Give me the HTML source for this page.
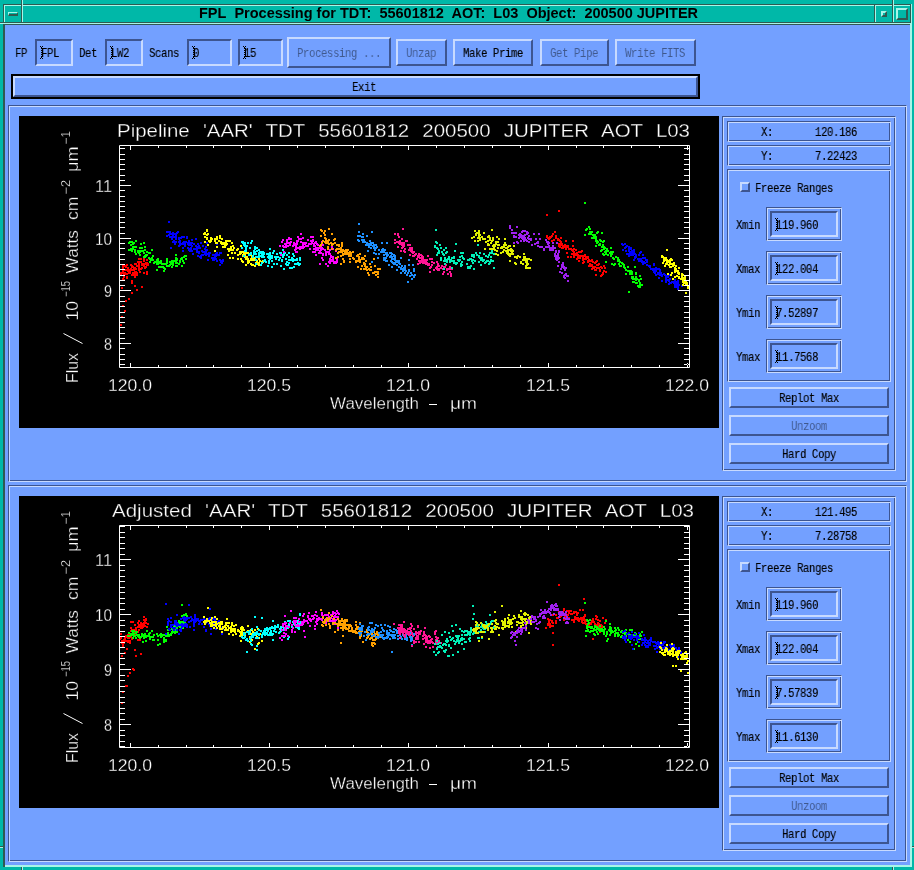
<!DOCTYPE html>
<html><head><meta charset="utf-8"><title>FPL Processing</title>
<style>
html,body{margin:0;padding:0;}
body{width:914px;height:870px;position:relative;overflow:hidden;background:#00b8a8;}
.abs,svg{will-change:transform;}
.abs{position:absolute;box-sizing:border-box;}
.ttl{font-family:"Liberation Sans",sans-serif;font-weight:bold;font-size:14.5px;line-height:17px;text-align:center;color:#000;white-space:pre;}
.mono{font-family:"Liberation Mono",monospace;font-size:13px;line-height:17px;color:#000;white-space:pre;transform:scaleX(0.82);transform-origin:0 0;letter-spacing:-0.483px;-webkit-text-stroke:0.15px currentColor;}
.ins{color:rgba(0,0,0,0.45);-webkit-text-stroke:0 !important;}
.fld{border-style:solid;border-width:2px;border-color:#3d5590 #c8daff #c8daff #3d5590;}
.btn{background:#73a0ff;border-style:solid;border-width:2px;border-color:#c8daff #3d5590 #3d5590 #c8daff;}
.etch{border-style:solid;border-width:1px;border-color:#3d5590 #c8daff #c8daff #3d5590;box-shadow:inset 1px 1px 0 #c8daff, inset -1px -1px 0 #3d5590;}
.chk{border-style:solid;border-width:2px;border-color:#c8daff #3d5590 #3d5590 #c8daff;}
.ibeam{width:3px;height:10px;border-left:1px dotted #000;}
</style></head>
<body>
<div class="abs" style="left:0px;top:0px;width:914px;height:870px;background:#00b8a8"></div>
<div class="abs" style="left:3px;top:4px;width:908px;height:20px;border-top:1px solid #2f5a52;border-left:1px solid #2f5a52;"></div>
<div class="abs" style="left:4px;top:5px;width:908px;height:19px;border-top:1px solid #a8f5e8;border-left:1px solid #a8f5e8;"></div>
<div class="abs" style="left:21px;top:0px;width:1px;height:23px;background:#2f5a52"></div>
<div class="abs" style="left:22px;top:0px;width:1px;height:23px;background:#a8f5e8"></div>
<div class="abs" style="left:874px;top:5px;width:1px;height:18px;background:#2f5a52"></div>
<div class="abs" style="left:875px;top:5px;width:1px;height:18px;background:#a8f5e8"></div>
<div class="abs" style="left:892px;top:0px;width:1px;height:23px;background:#2f5a52"></div>
<div class="abs" style="left:893px;top:0px;width:1px;height:23px;background:#a8f5e8"></div>
<div class="abs" style="left:910px;top:4px;width:1px;height:19px;background:#2f5a52"></div>
<div class="abs" style="left:911px;top:4px;width:1px;height:863px;background:#a8f5e8"></div>
<div class="abs" style="left:0px;top:22px;width:911px;height:1px;background:#2f5a52"></div>
<div class="abs" style="left:0px;top:23px;width:912px;height:1px;background:#a8f5e8"></div>
<div class="abs" style="left:8px;top:12px;width:10px;height:4px;background:#00b8a8;border-top:1px solid #a8f5e8;border-left:1px solid #a8f5e8;border-bottom:2px solid #2f5a52;border-right:1px solid #2f5a52;"></div>
<div class="abs" style="left:881px;top:11px;width:6px;height:6px;border-top:2px solid #a8f5e8;border-left:2px solid #a8f5e8;border-bottom:2px solid #2f5a52;border-right:2px solid #2f5a52;"></div>
<div class="abs" style="left:896px;top:8px;width:12px;height:12px;border-top:2px solid #a8f5e8;border-left:2px solid #a8f5e8;border-bottom:2px solid #2f5a52;border-right:2px solid #2f5a52;"></div>
<div class="abs ttl" style="left:23px;top:5px;width:851px;height:17px;">FPL&nbsp; Processing for TDT:&nbsp; 55601812&nbsp; AOT:&nbsp; L03&nbsp; Object:&nbsp; 200500 JUPITER</div>
<div class="abs" style="left:5px;top:24px;width:907px;height:843px;background:#a8f5e8"></div>
<div class="abs" style="left:3px;top:24px;width:2px;height:843px;background:#2f5a52"></div>
<div class="abs" style="left:3px;top:24px;width:907px;height:841px;background:#2f5a52"></div>
<div class="abs" style="left:5px;top:25px;width:905px;height:840px;background:#73a0ff"></div>
<div class="abs" style="left:0px;top:846px;width:3px;height:1px;background:#2f5a52"></div>
<div class="abs" style="left:0px;top:847px;width:3px;height:1px;background:#a8f5e8"></div>
<div class="abs" style="left:912px;top:846px;width:2px;height:1px;background:#2f5a52"></div>
<div class="abs" style="left:912px;top:847px;width:2px;height:1px;background:#a8f5e8"></div>
<div class="abs" style="left:21px;top:867px;width:1px;height:3px;background:#2f5a52"></div>
<div class="abs" style="left:22px;top:867px;width:1px;height:3px;background:#a8f5e8"></div>
<div class="abs" style="left:892px;top:867px;width:1px;height:3px;background:#2f5a52"></div>
<div class="abs" style="left:893px;top:867px;width:1px;height:3px;background:#a8f5e8"></div>
<div class="abs mono" style="left:15px;top:45px;">FP</div>
<div class="abs fld" style="left:35px;top:39px;width:38px;height:27px;"></div>
<div class="abs mono" style="left:41px;top:45px;">FPL</div>
<svg class="abs" style="left:40px;top:46px" width="3" height="13" viewBox="0 0 3 13"><path fill="#000" d="M0 0h1v1h-1zM2 0h1v1h-1zM1 1h1v1h-1zM1 11h1v1h-1zM0 12h1v1h-1zM2 12h1v1h-1zM2 2h1v1h-1zM2 3h1v1h-1zM2 4h1v1h-1zM2 5h1v1h-1zM2 6h1v1h-1zM2 7h1v1h-1zM2 8h1v1h-1zM2 9h1v1h-1zM2 10h1v1h-1zM1 2h1v1h-1zM1 4h1v1h-1zM1 6h1v1h-1zM1 8h1v1h-1zM1 10h1v1h-1z"/></svg>
<div class="abs mono" style="left:79px;top:45px;">Det</div>
<div class="abs fld" style="left:105px;top:39px;width:38px;height:27px;"></div>
<div class="abs mono" style="left:111px;top:45px;">LW2</div>
<svg class="abs" style="left:110px;top:46px" width="3" height="13" viewBox="0 0 3 13"><path fill="#000" d="M0 0h1v1h-1zM2 0h1v1h-1zM1 1h1v1h-1zM1 11h1v1h-1zM0 12h1v1h-1zM2 12h1v1h-1zM2 2h1v1h-1zM2 3h1v1h-1zM2 4h1v1h-1zM2 5h1v1h-1zM2 6h1v1h-1zM2 7h1v1h-1zM2 8h1v1h-1zM2 9h1v1h-1zM2 10h1v1h-1zM1 2h1v1h-1zM1 4h1v1h-1zM1 6h1v1h-1zM1 8h1v1h-1zM1 10h1v1h-1z"/></svg>
<div class="abs mono" style="left:149px;top:45px;">Scans</div>
<div class="abs fld" style="left:187px;top:39px;width:45px;height:27px;"></div>
<div class="abs mono" style="left:193px;top:45px;">0</div>
<svg class="abs" style="left:192px;top:46px" width="3" height="13" viewBox="0 0 3 13"><path fill="#000" d="M0 0h1v1h-1zM2 0h1v1h-1zM1 1h1v1h-1zM1 11h1v1h-1zM0 12h1v1h-1zM2 12h1v1h-1zM2 2h1v1h-1zM2 3h1v1h-1zM2 4h1v1h-1zM2 5h1v1h-1zM2 6h1v1h-1zM2 7h1v1h-1zM2 8h1v1h-1zM2 9h1v1h-1zM2 10h1v1h-1zM1 2h1v1h-1zM1 4h1v1h-1zM1 6h1v1h-1zM1 8h1v1h-1zM1 10h1v1h-1z"/></svg>
<div class="abs fld" style="left:238px;top:39px;width:45px;height:27px;"></div>
<div class="abs mono" style="left:244px;top:45px;">15</div>
<svg class="abs" style="left:243px;top:46px" width="3" height="13" viewBox="0 0 3 13"><path fill="#000" d="M0 0h1v1h-1zM2 0h1v1h-1zM1 1h1v1h-1zM1 11h1v1h-1zM0 12h1v1h-1zM2 12h1v1h-1zM2 2h1v1h-1zM2 3h1v1h-1zM2 4h1v1h-1zM2 5h1v1h-1zM2 6h1v1h-1zM2 7h1v1h-1zM2 8h1v1h-1zM2 9h1v1h-1zM2 10h1v1h-1zM1 2h1v1h-1zM1 4h1v1h-1zM1 6h1v1h-1zM1 8h1v1h-1zM1 10h1v1h-1z"/></svg>
<div class="abs btn" style="left:287px;top:37px;width:104px;height:31px;"></div>
<div class="abs mono ins" style="left:297px;top:45px;">Processing&nbsp;...</div>
<div class="abs btn" style="left:396px;top:39px;width:51px;height:27px;"></div>
<div class="abs mono ins" style="left:406px;top:45px;">Unzap</div>
<div class="abs btn" style="left:453px;top:39px;width:80px;height:27px;"></div>
<div class="abs mono" style="left:463px;top:45px;">Make&nbsp;Prime</div>
<div class="abs btn" style="left:540px;top:39px;width:69px;height:27px;"></div>
<div class="abs mono ins" style="left:550px;top:45px;">Get&nbsp;Pipe</div>
<div class="abs btn" style="left:615px;top:39px;width:81px;height:27px;"></div>
<div class="abs mono ins" style="left:625px;top:45px;">Write&nbsp;FITS</div>
<div class="abs" style="left:11px;top:74px;width:689px;height:25px;background:#000"></div>
<div class="abs btn" style="left:13px;top:76px;width:685px;height:21px;"></div>
<div class="abs mono" style="left:352px;top:79px;">Exit</div>
<div class="abs etch" style="left:8px;top:105px;width:899px;height:377px;"></div>
<div class="abs" style="left:19px;top:116px;width:700px;height:312px;background:#000"></div>
<svg class="abs" style="left:19px;top:116px" width="700" height="312" viewBox="19 116 700 312"><path fill="#ff0000" d="M133 267h2v2h-2zM134 273h2v2h-2zM138 269h2v2h-2zM122 272h2v2h-2zM146 254h2v2h-2zM124 272h2v2h-2zM126 273h2v2h-2zM130 269h2v2h-2zM133 269h2v2h-2zM148 252h2v2h-2zM128 272h2v2h-2zM141 263h2v2h-2zM147 263h2v2h-2zM146 264h2v2h-2zM122 270h2v2h-2zM124 272h2v2h-2zM123 273h2v2h-2zM141 264h2v2h-2zM126 276h2v2h-2zM123 276h2v2h-2zM146 271h2v2h-2zM127 267h2v2h-2zM123 279h2v2h-2zM141 267h2v2h-2zM122 278h2v2h-2zM131 269h2v2h-2zM136 272h2v2h-2zM145 266h2v2h-2zM141 286h2v2h-2zM143 265h2v2h-2zM121 287h2v2h-2zM126 269h2v2h-2zM125 273h2v2h-2zM134 263h2v2h-2zM146 264h2v2h-2zM132 272h2v2h-2zM134 274h2v2h-2zM146 259h2v2h-2zM126 273h2v2h-2zM140 268h2v2h-2zM131 282h2v2h-2zM122 265h2v2h-2zM140 258h2v2h-2zM131 266h2v2h-2zM132 266h2v2h-2zM136 265h2v2h-2zM124 273h2v2h-2zM140 261h2v2h-2zM133 272h2v2h-2zM120 274h2v2h-2zM137 261h2v2h-2zM126 277h2v2h-2zM127 269h2v2h-2zM131 280h2v2h-2zM126 264h2v2h-2zM143 263h2v2h-2zM125 266h2v2h-2zM139 271h2v2h-2zM132 273h2v2h-2zM136 274h2v2h-2zM147 264h2v2h-2zM143 260h2v2h-2zM129 271h2v2h-2zM133 267h2v2h-2zM123 269h2v2h-2zM138 258h2v2h-2zM138 267h2v2h-2zM120 272h2v2h-2zM127 267h2v2h-2zM135 271h2v2h-2zM146 262h2v2h-2zM122 267h2v2h-2zM131 265h2v2h-2zM145 262h2v2h-2zM138 261h2v2h-2zM128 269h2v2h-2zM134 276h2v2h-2zM144 267h2v2h-2zM135 268h2v2h-2zM142 263h2v2h-2zM129 272h2v2h-2zM135 263h2v2h-2zM146 263h2v2h-2zM126 277h2v2h-2zM138 263h2v2h-2zM130 264h2v2h-2zM127 270h2v2h-2zM134 267h2v2h-2zM138 266h2v2h-2zM130 268h2v2h-2zM138 265h2v2h-2zM146 273h2v2h-2zM124 265h2v2h-2zM133 274h2v2h-2zM145 263h2v2h-2zM125 269h2v2h-2zM131 274h2v2h-2zM123 275h2v2h-2zM134 271h2v2h-2zM135 273h2v2h-2zM138 263h2v2h-2zM143 258h2v2h-2zM143 272h2v2h-2zM126 269h2v2h-2zM126 273h2v2h-2zM134 285h2v2h-2zM136 289h2v2h-2zM128 298h2v2h-2zM125 300h2v2h-2zM124 310h2v2h-2zM121 316h2v2h-2zM120 324h2v2h-2zM131 292h2v2h-2zM122 305h2v2h-2zM595 261h2v2h-2zM582 259h2v2h-2zM559 240h2v2h-2zM599 269h2v2h-2zM603 265h2v2h-2zM565 240h2v2h-2zM571 249h2v2h-2zM580 251h2v2h-2zM557 238h2v2h-2zM577 256h2v2h-2zM564 244h2v2h-2zM560 242h2v2h-2zM563 246h2v2h-2zM578 260h2v2h-2zM573 248h2v2h-2zM600 275h2v2h-2zM547 237h2v2h-2zM555 235h2v2h-2zM575 249h2v2h-2zM551 240h2v2h-2zM601 274h2v2h-2zM583 261h2v2h-2zM600 266h2v2h-2zM598 267h2v2h-2zM558 245h2v2h-2zM601 267h2v2h-2zM560 244h2v2h-2zM571 253h2v2h-2zM549 236h2v2h-2zM576 258h2v2h-2zM572 240h2v2h-2zM557 239h2v2h-2zM550 236h2v2h-2zM596 264h2v2h-2zM588 259h2v2h-2zM574 253h2v2h-2zM598 263h2v2h-2zM596 260h2v2h-2zM572 250h2v2h-2zM590 265h2v2h-2zM587 256h2v2h-2zM560 244h2v2h-2zM573 254h2v2h-2zM570 256h2v2h-2zM561 243h2v2h-2zM554 231h2v2h-2zM560 241h2v2h-2zM591 259h2v2h-2zM605 271h2v2h-2zM582 258h2v2h-2zM592 266h2v2h-2zM565 245h2v2h-2zM582 262h2v2h-2zM587 257h2v2h-2zM593 267h2v2h-2zM557 239h2v2h-2zM583 258h2v2h-2zM562 247h2v2h-2zM595 269h2v2h-2zM561 243h2v2h-2zM551 240h2v2h-2zM560 243h2v2h-2zM566 252h2v2h-2zM594 266h2v2h-2zM562 245h2v2h-2zM546 236h2v2h-2zM585 258h2v2h-2zM585 256h2v2h-2zM578 251h2v2h-2zM546 235h2v2h-2zM572 245h2v2h-2zM588 265h2v2h-2zM597 264h2v2h-2zM577 257h2v2h-2zM602 272h2v2h-2zM592 266h2v2h-2zM583 255h2v2h-2zM581 250h2v2h-2zM558 239h2v2h-2zM594 269h2v2h-2zM594 262h2v2h-2zM599 270h2v2h-2zM591 268h2v2h-2zM592 267h2v2h-2zM602 273h2v2h-2zM557 239h2v2h-2zM587 260h2v2h-2zM568 248h2v2h-2zM596 264h2v2h-2zM597 264h2v2h-2zM553 239h2v2h-2zM573 256h2v2h-2zM551 235h2v2h-2zM555 237h2v2h-2zM597 267h2v2h-2zM579 255h2v2h-2zM582 256h2v2h-2zM576 252h2v2h-2zM590 260h2v2h-2zM573 253h2v2h-2zM592 261h2v2h-2zM590 264h2v2h-2zM591 264h2v2h-2zM595 274h2v2h-2zM567 245h2v2h-2zM596 267h2v2h-2zM604 267h2v2h-2zM549 237h2v2h-2zM581 255h2v2h-2zM565 248h2v2h-2zM560 237h2v2h-2zM592 261h2v2h-2zM579 257h2v2h-2zM551 235h2v2h-2zM599 270h2v2h-2zM584 254h2v2h-2zM558 243h2v2h-2zM567 256h2v2h-2zM603 270h2v2h-2zM548 238h2v2h-2zM587 261h2v2h-2zM565 247h2v2h-2zM570 248h2v2h-2zM567 246h2v2h-2zM552 233h2v2h-2zM575 254h2v2h-2zM589 260h2v2h-2zM573 251h2v2h-2zM577 254h2v2h-2zM589 263h2v2h-2zM559 246h2v2h-2zM587 260h2v2h-2zM600 266h2v2h-2zM577 254h2v2h-2zM561 247h2v2h-2zM546 214h2v2h-2zM558 210h2v2h-2z"/><path fill="#00ff00" d="M175 260h2v2h-2zM151 257h2v2h-2zM166 262h2v2h-2zM154 261h2v2h-2zM139 251h2v2h-2zM157 262h2v2h-2zM140 243h2v2h-2zM183 262h2v2h-2zM153 262h2v2h-2zM156 261h2v2h-2zM167 265h2v2h-2zM169 264h2v2h-2zM157 258h2v2h-2zM166 258h2v2h-2zM162 263h2v2h-2zM143 242h2v2h-2zM175 258h2v2h-2zM166 260h2v2h-2zM167 265h2v2h-2zM128 242h2v2h-2zM141 247h2v2h-2zM163 263h2v2h-2zM184 255h2v2h-2zM183 256h2v2h-2zM143 252h2v2h-2zM149 261h2v2h-2zM159 262h2v2h-2zM185 258h2v2h-2zM162 266h2v2h-2zM138 252h2v2h-2zM162 263h2v2h-2zM156 263h2v2h-2zM163 267h2v2h-2zM145 254h2v2h-2zM135 253h2v2h-2zM172 262h2v2h-2zM131 250h2v2h-2zM181 258h2v2h-2zM170 262h2v2h-2zM160 262h2v2h-2zM139 250h2v2h-2zM152 259h2v2h-2zM160 260h2v2h-2zM185 255h2v2h-2zM135 240h2v2h-2zM148 252h2v2h-2zM160 262h2v2h-2zM144 246h2v2h-2zM130 249h2v2h-2zM161 263h2v2h-2zM132 246h2v2h-2zM149 258h2v2h-2zM170 263h2v2h-2zM173 260h2v2h-2zM152 255h2v2h-2zM163 270h2v2h-2zM168 265h2v2h-2zM134 249h2v2h-2zM158 261h2v2h-2zM171 266h2v2h-2zM132 243h2v2h-2zM143 256h2v2h-2zM148 252h2v2h-2zM181 257h2v2h-2zM172 264h2v2h-2zM181 265h2v2h-2zM148 257h2v2h-2zM139 247h2v2h-2zM176 265h2v2h-2zM179 261h2v2h-2zM159 261h2v2h-2zM171 260h2v2h-2zM133 242h2v2h-2zM134 251h2v2h-2zM164 268h2v2h-2zM156 263h2v2h-2zM182 260h2v2h-2zM169 261h2v2h-2zM175 257h2v2h-2zM176 259h2v2h-2zM157 259h2v2h-2zM151 249h2v2h-2zM149 258h2v2h-2zM145 255h2v2h-2zM135 246h2v2h-2zM130 244h2v2h-2zM130 248h2v2h-2zM141 250h2v2h-2zM139 254h2v2h-2zM146 251h2v2h-2zM144 249h2v2h-2zM157 263h2v2h-2zM131 241h2v2h-2zM156 269h2v2h-2zM165 263h2v2h-2zM149 252h2v2h-2zM137 251h2v2h-2zM175 254h2v2h-2zM144 256h2v2h-2zM129 241h2v2h-2zM133 246h2v2h-2zM156 259h2v2h-2zM176 258h2v2h-2zM180 258h2v2h-2zM158 266h2v2h-2zM146 254h2v2h-2zM153 262h2v2h-2zM131 249h2v2h-2zM175 261h2v2h-2zM166 261h2v2h-2zM129 241h2v2h-2zM160 266h2v2h-2zM144 255h2v2h-2zM142 250h2v2h-2zM181 257h2v2h-2zM175 262h2v2h-2zM166 265h2v2h-2zM176 262h2v2h-2zM137 250h2v2h-2zM179 260h2v2h-2zM170 263h2v2h-2zM150 259h2v2h-2zM183 256h2v2h-2zM128 249h2v2h-2zM132 248h2v2h-2zM175 265h2v2h-2zM178 263h2v2h-2zM593 236h2v2h-2zM595 236h2v2h-2zM623 266h2v2h-2zM617 259h2v2h-2zM640 278h2v2h-2zM589 231h2v2h-2zM601 232h2v2h-2zM631 276h2v2h-2zM605 261h2v2h-2zM603 246h2v2h-2zM619 261h2v2h-2zM634 266h2v2h-2zM597 241h2v2h-2zM629 273h2v2h-2zM624 267h2v2h-2zM635 276h2v2h-2zM586 228h2v2h-2zM635 279h2v2h-2zM604 247h2v2h-2zM610 254h2v2h-2zM584 234h2v2h-2zM635 276h2v2h-2zM600 240h2v2h-2zM598 244h2v2h-2zM600 250h2v2h-2zM591 237h2v2h-2zM599 243h2v2h-2zM638 286h2v2h-2zM600 240h2v2h-2zM588 226h2v2h-2zM617 257h2v2h-2zM613 258h2v2h-2zM622 263h2v2h-2zM599 243h2v2h-2zM590 232h2v2h-2zM632 276h2v2h-2zM638 279h2v2h-2zM604 251h2v2h-2zM615 256h2v2h-2zM613 258h2v2h-2zM639 282h2v2h-2zM620 265h2v2h-2zM607 254h2v2h-2zM592 234h2v2h-2zM633 281h2v2h-2zM607 250h2v2h-2zM636 282h2v2h-2zM591 231h2v2h-2zM603 254h2v2h-2zM628 291h2v2h-2zM595 240h2v2h-2zM615 256h2v2h-2zM610 251h2v2h-2zM605 252h2v2h-2zM639 275h2v2h-2zM613 258h2v2h-2zM632 281h2v2h-2zM594 234h2v2h-2zM601 249h2v2h-2zM630 271h2v2h-2zM599 239h2v2h-2zM610 254h2v2h-2zM617 260h2v2h-2zM589 228h2v2h-2zM595 245h2v2h-2zM609 252h2v2h-2zM618 259h2v2h-2zM599 243h2v2h-2zM605 252h2v2h-2zM623 264h2v2h-2zM630 270h2v2h-2zM595 240h2v2h-2zM619 265h2v2h-2zM631 277h2v2h-2zM619 265h2v2h-2zM623 266h2v2h-2zM606 248h2v2h-2zM632 277h2v2h-2zM606 249h2v2h-2zM592 234h2v2h-2zM641 284h2v2h-2zM631 271h2v2h-2zM610 252h2v2h-2zM632 281h2v2h-2zM597 231h2v2h-2zM640 284h2v2h-2zM593 234h2v2h-2zM595 238h2v2h-2zM588 233h2v2h-2zM639 284h2v2h-2zM614 263h2v2h-2zM636 278h2v2h-2zM601 246h2v2h-2zM590 233h2v2h-2zM638 280h2v2h-2zM602 241h2v2h-2zM602 245h2v2h-2zM611 253h2v2h-2zM596 240h2v2h-2zM635 282h2v2h-2zM601 249h2v2h-2zM605 253h2v2h-2zM613 258h2v2h-2zM611 263h2v2h-2zM619 265h2v2h-2zM589 233h2v2h-2zM590 232h2v2h-2zM625 273h2v2h-2zM629 272h2v2h-2zM618 263h2v2h-2zM637 285h2v2h-2zM602 253h2v2h-2zM585 229h2v2h-2zM603 248h2v2h-2zM635 272h2v2h-2zM595 236h2v2h-2zM634 278h2v2h-2zM613 264h2v2h-2zM612 251h2v2h-2zM627 266h2v2h-2zM627 270h2v2h-2zM639 286h2v2h-2zM603 240h2v2h-2zM639 282h2v2h-2zM596 232h2v2h-2zM631 273h2v2h-2zM603 247h2v2h-2zM628 270h2v2h-2zM605 250h2v2h-2zM612 257h2v2h-2zM596 242h2v2h-2zM593 237h2v2h-2zM602 244h2v2h-2zM610 247h2v2h-2zM625 269h2v2h-2zM635 273h2v2h-2zM631 276h2v2h-2zM621 262h2v2h-2zM632 278h2v2h-2zM599 244h2v2h-2zM610 255h2v2h-2zM592 237h2v2h-2zM584 202h2v2h-2z"/><path fill="#0000ff" d="M175 236h2v2h-2zM207 259h2v2h-2zM202 251h2v2h-2zM197 255h2v2h-2zM188 249h2v2h-2zM172 234h2v2h-2zM200 242h2v2h-2zM213 259h2v2h-2zM182 250h2v2h-2zM212 254h2v2h-2zM170 233h2v2h-2zM202 245h2v2h-2zM187 242h2v2h-2zM178 241h2v2h-2zM197 247h2v2h-2zM198 247h2v2h-2zM205 249h2v2h-2zM191 242h2v2h-2zM205 254h2v2h-2zM212 259h2v2h-2zM196 246h2v2h-2zM190 247h2v2h-2zM206 242h2v2h-2zM208 252h2v2h-2zM172 236h2v2h-2zM168 234h2v2h-2zM183 242h2v2h-2zM216 243h2v2h-2zM190 249h2v2h-2zM199 256h2v2h-2zM173 236h2v2h-2zM179 240h2v2h-2zM215 258h2v2h-2zM201 250h2v2h-2zM186 237h2v2h-2zM192 253h2v2h-2zM217 254h2v2h-2zM195 238h2v2h-2zM178 245h2v2h-2zM169 231h2v2h-2zM216 252h2v2h-2zM205 252h2v2h-2zM178 237h2v2h-2zM175 233h2v2h-2zM188 240h2v2h-2zM180 237h2v2h-2zM184 245h2v2h-2zM190 244h2v2h-2zM200 255h2v2h-2zM171 233h2v2h-2zM182 247h2v2h-2zM220 260h2v2h-2zM187 243h2v2h-2zM196 251h2v2h-2zM208 253h2v2h-2zM205 250h2v2h-2zM209 252h2v2h-2zM191 239h2v2h-2zM179 244h2v2h-2zM193 243h2v2h-2zM198 252h2v2h-2zM166 235h2v2h-2zM183 243h2v2h-2zM198 245h2v2h-2zM175 238h2v2h-2zM201 254h2v2h-2zM171 238h2v2h-2zM176 232h2v2h-2zM169 236h2v2h-2zM219 259h2v2h-2zM220 260h2v2h-2zM169 233h2v2h-2zM188 244h2v2h-2zM168 221h2v2h-2zM178 238h2v2h-2zM191 250h2v2h-2zM222 259h2v2h-2zM202 254h2v2h-2zM215 253h2v2h-2zM187 247h2v2h-2zM179 242h2v2h-2zM175 241h2v2h-2zM185 241h2v2h-2zM214 256h2v2h-2zM205 252h2v2h-2zM174 243h2v2h-2zM206 253h2v2h-2zM219 252h2v2h-2zM216 260h2v2h-2zM170 247h2v2h-2zM195 248h2v2h-2zM168 234h2v2h-2zM183 241h2v2h-2zM205 246h2v2h-2zM174 242h2v2h-2zM189 242h2v2h-2zM182 242h2v2h-2zM166 231h2v2h-2zM220 252h2v2h-2zM177 231h2v2h-2zM214 254h2v2h-2zM191 245h2v2h-2zM184 243h2v2h-2zM189 248h2v2h-2zM179 242h2v2h-2zM174 233h2v2h-2zM204 253h2v2h-2zM171 236h2v2h-2zM198 251h2v2h-2zM168 231h2v2h-2zM181 243h2v2h-2zM200 257h2v2h-2zM218 254h2v2h-2zM189 250h2v2h-2zM215 255h2v2h-2zM173 240h2v2h-2zM221 261h2v2h-2zM205 251h2v2h-2zM187 243h2v2h-2zM195 245h2v2h-2zM219 264h2v2h-2zM183 236h2v2h-2zM221 262h2v2h-2zM193 248h2v2h-2zM208 255h2v2h-2zM184 241h2v2h-2zM171 238h2v2h-2zM172 232h2v2h-2zM175 235h2v2h-2zM181 236h2v2h-2zM206 249h2v2h-2zM186 236h2v2h-2zM197 243h2v2h-2zM213 257h2v2h-2zM204 251h2v2h-2zM199 247h2v2h-2zM204 248h2v2h-2zM220 261h2v2h-2zM172 241h2v2h-2zM222 260h2v2h-2zM196 249h2v2h-2zM211 257h2v2h-2zM681 285h2v2h-2zM675 283h2v2h-2zM654 271h2v2h-2zM669 274h2v2h-2zM634 257h2v2h-2zM665 281h2v2h-2zM646 260h2v2h-2zM628 253h2v2h-2zM652 269h2v2h-2zM674 286h2v2h-2zM677 286h2v2h-2zM667 274h2v2h-2zM633 249h2v2h-2zM653 271h2v2h-2zM628 248h2v2h-2zM674 284h2v2h-2zM676 286h2v2h-2zM660 274h2v2h-2zM634 256h2v2h-2zM629 251h2v2h-2zM659 269h2v2h-2zM677 281h2v2h-2zM638 259h2v2h-2zM643 262h2v2h-2zM655 270h2v2h-2zM655 269h2v2h-2zM675 281h2v2h-2zM654 270h2v2h-2zM642 261h2v2h-2zM625 250h2v2h-2zM664 274h2v2h-2zM660 274h2v2h-2zM624 243h2v2h-2zM631 253h2v2h-2zM639 260h2v2h-2zM659 274h2v2h-2zM663 273h2v2h-2zM621 243h2v2h-2zM654 272h2v2h-2zM677 283h2v2h-2zM637 258h2v2h-2zM675 285h2v2h-2zM642 257h2v2h-2zM677 288h2v2h-2zM677 280h2v2h-2zM622 249h2v2h-2zM668 280h2v2h-2zM630 248h2v2h-2zM653 268h2v2h-2zM676 285h2v2h-2zM635 254h2v2h-2zM669 282h2v2h-2zM638 258h2v2h-2zM645 259h2v2h-2zM629 247h2v2h-2zM631 250h2v2h-2zM664 274h2v2h-2zM663 273h2v2h-2zM658 268h2v2h-2zM649 265h2v2h-2zM661 275h2v2h-2zM665 275h2v2h-2zM648 265h2v2h-2zM638 260h2v2h-2zM628 255h2v2h-2zM641 260h2v2h-2zM624 247h2v2h-2zM661 274h2v2h-2zM673 281h2v2h-2zM630 248h2v2h-2zM628 246h2v2h-2zM658 277h2v2h-2zM655 267h2v2h-2zM632 254h2v2h-2zM622 244h2v2h-2zM634 253h2v2h-2zM630 254h2v2h-2zM630 247h2v2h-2zM659 273h2v2h-2zM646 264h2v2h-2zM626 253h2v2h-2zM668 283h2v2h-2zM671 281h2v2h-2zM643 261h2v2h-2zM670 282h2v2h-2zM675 285h2v2h-2zM667 276h2v2h-2zM656 268h2v2h-2zM653 263h2v2h-2zM626 245h2v2h-2zM630 252h2v2h-2zM641 261h2v2h-2zM629 251h2v2h-2zM625 246h2v2h-2zM676 285h2v2h-2zM665 279h2v2h-2zM631 253h2v2h-2zM657 272h2v2h-2zM634 257h2v2h-2zM655 274h2v2h-2zM642 254h2v2h-2zM665 276h2v2h-2zM639 252h2v2h-2zM657 273h2v2h-2zM640 259h2v2h-2zM650 268h2v2h-2zM630 252h2v2h-2zM640 251h2v2h-2zM634 257h2v2h-2zM638 254h2v2h-2zM632 251h2v2h-2zM667 279h2v2h-2zM655 270h2v2h-2zM660 272h2v2h-2zM644 257h2v2h-2zM633 253h2v2h-2zM674 279h2v2h-2zM665 278h2v2h-2zM628 250h2v2h-2zM649 266h2v2h-2zM661 280h2v2h-2zM643 262h2v2h-2zM635 256h2v2h-2zM669 278h2v2h-2zM678 284h2v2h-2zM633 251h2v2h-2zM640 258h2v2h-2zM646 259h2v2h-2zM633 253h2v2h-2zM677 285h2v2h-2zM651 268h2v2h-2zM653 264h2v2h-2zM646 261h2v2h-2zM648 265h2v2h-2zM659 271h2v2h-2zM635 256h2v2h-2zM642 263h2v2h-2zM635 254h2v2h-2zM644 262h2v2h-2zM673 282h2v2h-2zM661 274h2v2h-2zM633 259h2v2h-2z"/><path fill="#ffff00" d="M240 252h2v2h-2zM244 253h2v2h-2zM214 238h2v2h-2zM232 249h2v2h-2zM236 249h2v2h-2zM216 242h2v2h-2zM207 233h2v2h-2zM204 236h2v2h-2zM214 240h2v2h-2zM252 259h2v2h-2zM241 260h2v2h-2zM252 264h2v2h-2zM246 256h2v2h-2zM209 241h2v2h-2zM222 243h2v2h-2zM258 262h2v2h-2zM248 261h2v2h-2zM252 259h2v2h-2zM259 260h2v2h-2zM256 260h2v2h-2zM225 240h2v2h-2zM224 246h2v2h-2zM257 263h2v2h-2zM247 252h2v2h-2zM244 255h2v2h-2zM225 244h2v2h-2zM224 244h2v2h-2zM214 250h2v2h-2zM207 244h2v2h-2zM216 238h2v2h-2zM220 241h2v2h-2zM214 239h2v2h-2zM240 251h2v2h-2zM240 245h2v2h-2zM234 252h2v2h-2zM243 252h2v2h-2zM225 243h2v2h-2zM233 247h2v2h-2zM239 251h2v2h-2zM231 242h2v2h-2zM245 264h2v2h-2zM210 237h2v2h-2zM254 257h2v2h-2zM250 258h2v2h-2zM254 265h2v2h-2zM230 246h2v2h-2zM221 243h2v2h-2zM250 263h2v2h-2zM251 258h2v2h-2zM250 259h2v2h-2zM206 230h2v2h-2zM208 240h2v2h-2zM242 261h2v2h-2zM216 236h2v2h-2zM214 239h2v2h-2zM222 242h2v2h-2zM239 253h2v2h-2zM244 256h2v2h-2zM258 264h2v2h-2zM262 261h2v2h-2zM222 246h2v2h-2zM227 248h2v2h-2zM232 257h2v2h-2zM216 246h2v2h-2zM219 235h2v2h-2zM258 258h2v2h-2zM229 248h2v2h-2zM229 257h2v2h-2zM242 255h2v2h-2zM255 262h2v2h-2zM250 254h2v2h-2zM210 239h2v2h-2zM225 242h2v2h-2zM257 262h2v2h-2zM230 248h2v2h-2zM245 252h2v2h-2zM262 260h2v2h-2zM245 258h2v2h-2zM227 254h2v2h-2zM216 242h2v2h-2zM247 260h2v2h-2zM240 258h2v2h-2zM247 258h2v2h-2zM206 229h2v2h-2zM203 233h2v2h-2zM209 240h2v2h-2zM211 238h2v2h-2zM233 247h2v2h-2zM228 249h2v2h-2zM236 249h2v2h-2zM254 259h2v2h-2zM229 240h2v2h-2zM228 250h2v2h-2zM247 259h2v2h-2zM204 241h2v2h-2zM242 254h2v2h-2zM209 240h2v2h-2zM221 238h2v2h-2zM257 262h2v2h-2zM226 243h2v2h-2zM224 245h2v2h-2zM230 248h2v2h-2zM206 234h2v2h-2zM216 242h2v2h-2zM232 245h2v2h-2zM204 233h2v2h-2zM237 258h2v2h-2zM224 242h2v2h-2zM220 242h2v2h-2zM206 237h2v2h-2zM251 255h2v2h-2zM222 246h2v2h-2zM251 264h2v2h-2zM251 259h2v2h-2zM204 232h2v2h-2zM242 251h2v2h-2zM237 248h2v2h-2zM243 253h2v2h-2zM249 254h2v2h-2zM230 249h2v2h-2zM248 260h2v2h-2zM243 255h2v2h-2zM219 237h2v2h-2zM214 238h2v2h-2zM210 237h2v2h-2zM227 240h2v2h-2zM231 252h2v2h-2zM210 240h2v2h-2zM215 242h2v2h-2zM237 254h2v2h-2zM252 257h2v2h-2zM261 261h2v2h-2zM218 240h2v2h-2zM206 238h2v2h-2zM226 243h2v2h-2zM256 261h2v2h-2zM247 262h2v2h-2zM204 233h2v2h-2zM224 242h2v2h-2zM251 256h2v2h-2zM214 238h2v2h-2zM250 253h2v2h-2zM666 263h2v2h-2zM681 274h2v2h-2zM682 284h2v2h-2zM685 281h2v2h-2zM667 273h2v2h-2zM672 263h2v2h-2zM661 255h2v2h-2zM686 282h2v2h-2zM683 282h2v2h-2zM669 261h2v2h-2zM682 278h2v2h-2zM686 283h2v2h-2zM665 263h2v2h-2zM663 260h2v2h-2zM667 261h2v2h-2zM677 271h2v2h-2zM683 278h2v2h-2zM684 279h2v2h-2zM678 276h2v2h-2zM682 281h2v2h-2zM671 272h2v2h-2zM669 263h2v2h-2zM662 262h2v2h-2zM665 257h2v2h-2zM681 273h2v2h-2zM670 258h2v2h-2zM684 278h2v2h-2zM686 283h2v2h-2zM672 278h2v2h-2zM671 259h2v2h-2zM678 277h2v2h-2zM668 260h2v2h-2zM675 268h2v2h-2zM684 281h2v2h-2zM663 257h2v2h-2zM684 277h2v2h-2zM667 261h2v2h-2zM674 267h2v2h-2zM667 261h2v2h-2zM662 256h2v2h-2zM683 279h2v2h-2zM675 265h2v2h-2zM681 275h2v2h-2zM664 265h2v2h-2zM680 278h2v2h-2zM683 282h2v2h-2zM681 276h2v2h-2zM670 263h2v2h-2zM678 272h2v2h-2zM687 285h2v2h-2zM666 249h2v2h-2zM678 273h2v2h-2zM664 259h2v2h-2zM676 275h2v2h-2zM674 271h2v2h-2zM669 266h2v2h-2zM670 274h2v2h-2zM674 269h2v2h-2zM668 264h2v2h-2zM676 270h2v2h-2zM661 256h2v2h-2zM682 274h2v2h-2zM682 279h2v2h-2zM685 283h2v2h-2zM680 278h2v2h-2zM670 266h2v2h-2zM681 278h2v2h-2zM673 262h2v2h-2zM677 272h2v2h-2zM677 270h2v2h-2zM666 261h2v2h-2zM673 262h2v2h-2zM684 275h2v2h-2zM666 259h2v2h-2zM684 280h2v2h-2zM685 292h2v2h-2zM669 259h2v2h-2zM663 258h2v2h-2zM672 265h2v2h-2zM666 261h2v2h-2zM682 277h2v2h-2zM673 264h2v2h-2zM678 267h2v2h-2zM687 287h2v2h-2zM674 276h2v2h-2z"/><path fill="#00ffff" d="M282 256h2v2h-2zM256 247h2v2h-2zM253 251h2v2h-2zM257 256h2v2h-2zM255 256h2v2h-2zM293 255h2v2h-2zM276 253h2v2h-2zM279 252h2v2h-2zM243 255h2v2h-2zM252 255h2v2h-2zM296 259h2v2h-2zM255 263h2v2h-2zM279 257h2v2h-2zM274 256h2v2h-2zM292 259h2v2h-2zM244 243h2v2h-2zM291 259h2v2h-2zM270 256h2v2h-2zM269 252h2v2h-2zM267 256h2v2h-2zM299 263h2v2h-2zM261 251h2v2h-2zM298 247h2v2h-2zM241 241h2v2h-2zM276 256h2v2h-2zM271 257h2v2h-2zM292 260h2v2h-2zM288 259h2v2h-2zM285 258h2v2h-2zM288 252h2v2h-2zM261 255h2v2h-2zM254 251h2v2h-2zM280 265h2v2h-2zM250 253h2v2h-2zM287 264h2v2h-2zM255 259h2v2h-2zM250 252h2v2h-2zM283 254h2v2h-2zM245 248h2v2h-2zM263 260h2v2h-2zM294 263h2v2h-2zM286 264h2v2h-2zM260 252h2v2h-2zM269 256h2v2h-2zM262 254h2v2h-2zM254 246h2v2h-2zM260 264h2v2h-2zM298 264h2v2h-2zM294 259h2v2h-2zM261 262h2v2h-2zM245 246h2v2h-2zM258 256h2v2h-2zM272 252h2v2h-2zM297 262h2v2h-2zM258 252h2v2h-2zM249 247h2v2h-2zM286 261h2v2h-2zM291 267h2v2h-2zM299 257h2v2h-2zM244 250h2v2h-2zM252 256h2v2h-2zM268 256h2v2h-2zM243 244h2v2h-2zM275 258h2v2h-2zM259 251h2v2h-2zM263 256h2v2h-2zM296 258h2v2h-2zM290 259h2v2h-2zM256 250h2v2h-2zM275 256h2v2h-2zM245 250h2v2h-2zM268 255h2v2h-2zM241 247h2v2h-2zM278 259h2v2h-2zM269 255h2v2h-2zM266 253h2v2h-2zM289 267h2v2h-2zM267 253h2v2h-2zM268 262h2v2h-2zM269 258h2v2h-2zM292 258h2v2h-2zM280 252h2v2h-2zM288 256h2v2h-2zM255 253h2v2h-2zM258 249h2v2h-2zM297 262h2v2h-2zM247 242h2v2h-2zM251 240h2v2h-2zM277 256h2v2h-2zM292 253h2v2h-2zM273 250h2v2h-2zM262 255h2v2h-2zM286 254h2v2h-2zM281 260h2v2h-2zM250 242h2v2h-2zM259 251h2v2h-2zM299 259h2v2h-2zM258 254h2v2h-2zM242 242h2v2h-2zM285 263h2v2h-2zM254 252h2v2h-2zM261 253h2v2h-2zM264 259h2v2h-2zM296 263h2v2h-2zM284 252h2v2h-2zM291 257h2v2h-2zM271 255h2v2h-2zM249 253h2v2h-2zM283 253h2v2h-2zM281 259h2v2h-2zM268 254h2v2h-2zM244 242h2v2h-2zM246 245h2v2h-2zM262 251h2v2h-2zM244 245h2v2h-2zM268 257h2v2h-2zM269 254h2v2h-2zM267 265h2v2h-2zM248 254h2v2h-2zM268 260h2v2h-2zM254 248h2v2h-2zM260 255h2v2h-2zM276 263h2v2h-2zM267 253h2v2h-2zM263 253h2v2h-2zM263 252h2v2h-2zM282 249h2v2h-2zM265 261h2v2h-2zM271 266h2v2h-2zM242 241h2v2h-2zM273 263h2v2h-2zM253 253h2v2h-2zM288 262h2v2h-2zM282 254h2v2h-2zM253 250h2v2h-2zM299 258h2v2h-2zM283 268h2v2h-2zM271 260h2v2h-2zM293 266h2v2h-2zM263 253h2v2h-2zM269 248h2v2h-2zM261 256h2v2h-2z"/><path fill="#ff00ff" d="M320 246h2v2h-2zM296 243h2v2h-2zM303 246h2v2h-2zM329 260h2v2h-2zM288 237h2v2h-2zM296 242h2v2h-2zM327 265h2v2h-2zM321 247h2v2h-2zM307 245h2v2h-2zM314 245h2v2h-2zM295 251h2v2h-2zM299 246h2v2h-2zM332 259h2v2h-2zM322 244h2v2h-2zM294 249h2v2h-2zM285 246h2v2h-2zM313 245h2v2h-2zM300 233h2v2h-2zM285 244h2v2h-2zM290 238h2v2h-2zM299 248h2v2h-2zM301 246h2v2h-2zM295 248h2v2h-2zM297 240h2v2h-2zM312 239h2v2h-2zM316 243h2v2h-2zM304 243h2v2h-2zM312 236h2v2h-2zM293 244h2v2h-2zM325 254h2v2h-2zM329 249h2v2h-2zM322 253h2v2h-2zM331 246h2v2h-2zM286 242h2v2h-2zM312 240h2v2h-2zM336 258h2v2h-2zM289 242h2v2h-2zM312 251h2v2h-2zM315 249h2v2h-2zM331 259h2v2h-2zM311 242h2v2h-2zM281 241h2v2h-2zM283 251h2v2h-2zM313 243h2v2h-2zM326 251h2v2h-2zM282 245h2v2h-2zM279 245h2v2h-2zM300 241h2v2h-2zM317 247h2v2h-2zM314 242h2v2h-2zM319 250h2v2h-2zM296 240h2v2h-2zM284 246h2v2h-2zM329 253h2v2h-2zM316 243h2v2h-2zM283 246h2v2h-2zM284 243h2v2h-2zM298 238h2v2h-2zM289 243h2v2h-2zM314 251h2v2h-2zM285 244h2v2h-2zM307 239h2v2h-2zM325 253h2v2h-2zM289 243h2v2h-2zM330 255h2v2h-2zM328 253h2v2h-2zM287 245h2v2h-2zM292 245h2v2h-2zM313 248h2v2h-2zM310 243h2v2h-2zM316 247h2v2h-2zM329 258h2v2h-2zM332 260h2v2h-2zM303 242h2v2h-2zM297 236h2v2h-2zM321 257h2v2h-2zM330 260h2v2h-2zM322 259h2v2h-2zM332 248h2v2h-2zM335 250h2v2h-2zM288 242h2v2h-2zM324 249h2v2h-2zM300 247h2v2h-2zM329 262h2v2h-2zM320 247h2v2h-2zM313 245h2v2h-2zM280 254h2v2h-2zM317 244h2v2h-2zM310 236h2v2h-2zM305 245h2v2h-2zM322 248h2v2h-2zM325 263h2v2h-2zM289 244h2v2h-2zM321 241h2v2h-2zM285 244h2v2h-2zM325 251h2v2h-2zM302 242h2v2h-2zM294 244h2v2h-2zM310 240h2v2h-2zM300 238h2v2h-2zM328 251h2v2h-2zM319 263h2v2h-2zM318 247h2v2h-2zM295 243h2v2h-2zM282 239h2v2h-2zM335 262h2v2h-2zM309 248h2v2h-2zM308 243h2v2h-2zM336 259h2v2h-2zM320 252h2v2h-2zM315 247h2v2h-2zM302 244h2v2h-2zM330 256h2v2h-2zM332 257h2v2h-2zM293 242h2v2h-2zM334 261h2v2h-2zM286 240h2v2h-2zM331 256h2v2h-2zM315 254h2v2h-2zM295 247h2v2h-2zM333 262h2v2h-2zM332 256h2v2h-2zM290 241h2v2h-2zM295 245h2v2h-2zM322 254h2v2h-2zM320 249h2v2h-2zM286 239h2v2h-2zM317 249h2v2h-2zM336 261h2v2h-2zM315 241h2v2h-2zM328 261h2v2h-2zM302 247h2v2h-2zM302 237h2v2h-2zM318 252h2v2h-2zM297 247h2v2h-2zM332 257h2v2h-2zM289 242h2v2h-2zM296 251h2v2h-2zM301 246h2v2h-2zM305 242h2v2h-2zM317 249h2v2h-2zM288 238h2v2h-2z"/><path fill="#ffa000" d="M320 235h2v2h-2zM320 244h2v2h-2zM341 242h2v2h-2zM328 243h2v2h-2zM325 241h2v2h-2zM379 268h2v2h-2zM361 265h2v2h-2zM357 260h2v2h-2zM349 251h2v2h-2zM365 266h2v2h-2zM324 237h2v2h-2zM344 251h2v2h-2zM365 260h2v2h-2zM322 240h2v2h-2zM324 234h2v2h-2zM357 260h2v2h-2zM346 252h2v2h-2zM327 240h2v2h-2zM321 230h2v2h-2zM330 242h2v2h-2zM364 263h2v2h-2zM327 248h2v2h-2zM373 272h2v2h-2zM333 239h2v2h-2zM344 253h2v2h-2zM346 250h2v2h-2zM353 258h2v2h-2zM341 251h2v2h-2zM375 271h2v2h-2zM342 253h2v2h-2zM368 268h2v2h-2zM321 242h2v2h-2zM365 268h2v2h-2zM363 268h2v2h-2zM340 247h2v2h-2zM364 255h2v2h-2zM374 271h2v2h-2zM366 269h2v2h-2zM368 274h2v2h-2zM370 269h2v2h-2zM338 245h2v2h-2zM367 272h2v2h-2zM340 249h2v2h-2zM342 254h2v2h-2zM336 244h2v2h-2zM348 255h2v2h-2zM337 248h2v2h-2zM348 252h2v2h-2zM346 253h2v2h-2zM364 265h2v2h-2zM363 258h2v2h-2zM370 266h2v2h-2zM349 255h2v2h-2zM369 263h2v2h-2zM355 261h2v2h-2zM342 258h2v2h-2zM327 242h2v2h-2zM338 248h2v2h-2zM362 257h2v2h-2zM325 238h2v2h-2zM374 271h2v2h-2zM341 243h2v2h-2zM327 246h2v2h-2zM325 242h2v2h-2zM347 249h2v2h-2zM372 272h2v2h-2zM345 251h2v2h-2zM377 273h2v2h-2zM332 243h2v2h-2zM334 238h2v2h-2zM338 244h2v2h-2zM361 257h2v2h-2zM348 254h2v2h-2zM340 255h2v2h-2zM334 242h2v2h-2zM374 265h2v2h-2zM352 251h2v2h-2zM369 269h2v2h-2zM349 254h2v2h-2zM358 258h2v2h-2zM358 256h2v2h-2zM366 269h2v2h-2zM359 261h2v2h-2zM343 253h2v2h-2zM345 249h2v2h-2zM320 229h2v2h-2zM355 260h2v2h-2zM357 254h2v2h-2zM359 253h2v2h-2zM366 266h2v2h-2zM356 255h2v2h-2zM341 245h2v2h-2zM377 268h2v2h-2zM377 271h2v2h-2zM319 245h2v2h-2zM342 249h2v2h-2zM338 251h2v2h-2zM343 260h2v2h-2zM331 244h2v2h-2zM337 256h2v2h-2zM350 255h2v2h-2zM341 244h2v2h-2zM361 258h2v2h-2zM323 232h2v2h-2zM377 276h2v2h-2zM357 266h2v2h-2zM350 254h2v2h-2zM324 241h2v2h-2zM337 252h2v2h-2zM373 258h2v2h-2zM336 248h2v2h-2zM325 238h2v2h-2zM363 263h2v2h-2zM324 230h2v2h-2zM345 252h2v2h-2zM350 252h2v2h-2zM360 268h2v2h-2zM352 257h2v2h-2zM335 257h2v2h-2zM343 250h2v2h-2zM363 262h2v2h-2zM328 239h2v2h-2zM375 274h2v2h-2zM327 242h2v2h-2zM340 263h2v2h-2zM352 257h2v2h-2zM370 266h2v2h-2zM359 259h2v2h-2zM331 233h2v2h-2zM349 261h2v2h-2zM326 240h2v2h-2zM340 251h2v2h-2zM344 251h2v2h-2zM349 258h2v2h-2zM335 249h2v2h-2zM364 264h2v2h-2zM361 257h2v2h-2zM331 248h2v2h-2zM325 240h2v2h-2zM328 228h2v2h-2zM343 261h2v2h-2zM374 271h2v2h-2z"/><path fill="#1e90ff" d="M361 236h2v2h-2zM364 241h2v2h-2zM391 253h2v2h-2zM366 244h2v2h-2zM358 223h2v2h-2zM386 242h2v2h-2zM403 268h2v2h-2zM401 265h2v2h-2zM383 250h2v2h-2zM407 281h2v2h-2zM362 236h2v2h-2zM366 242h2v2h-2zM362 233h2v2h-2zM405 270h2v2h-2zM402 268h2v2h-2zM383 254h2v2h-2zM382 248h2v2h-2zM407 272h2v2h-2zM404 265h2v2h-2zM358 240h2v2h-2zM411 274h2v2h-2zM389 256h2v2h-2zM370 244h2v2h-2zM408 270h2v2h-2zM372 242h2v2h-2zM373 252h2v2h-2zM371 231h2v2h-2zM376 246h2v2h-2zM394 262h2v2h-2zM393 263h2v2h-2zM365 244h2v2h-2zM412 264h2v2h-2zM390 252h2v2h-2zM375 247h2v2h-2zM393 255h2v2h-2zM357 239h2v2h-2zM387 254h2v2h-2zM395 261h2v2h-2zM366 235h2v2h-2zM373 246h2v2h-2zM368 243h2v2h-2zM373 247h2v2h-2zM386 252h2v2h-2zM392 258h2v2h-2zM384 259h2v2h-2zM389 252h2v2h-2zM400 268h2v2h-2zM400 272h2v2h-2zM414 274h2v2h-2zM380 251h2v2h-2zM398 260h2v2h-2zM398 262h2v2h-2zM396 264h2v2h-2zM398 262h2v2h-2zM366 243h2v2h-2zM408 269h2v2h-2zM388 264h2v2h-2zM358 231h2v2h-2zM394 263h2v2h-2zM383 259h2v2h-2zM384 249h2v2h-2zM375 244h2v2h-2zM390 260h2v2h-2zM385 257h2v2h-2zM381 251h2v2h-2zM393 254h2v2h-2zM370 243h2v2h-2zM370 247h2v2h-2zM371 261h2v2h-2zM381 251h2v2h-2zM390 255h2v2h-2zM363 239h2v2h-2zM404 268h2v2h-2zM386 255h2v2h-2zM357 239h2v2h-2zM413 270h2v2h-2zM409 275h2v2h-2zM385 252h2v2h-2zM369 240h2v2h-2zM391 261h2v2h-2zM386 260h2v2h-2zM391 258h2v2h-2zM413 275h2v2h-2zM362 239h2v2h-2zM362 241h2v2h-2zM402 270h2v2h-2zM413 276h2v2h-2zM397 261h2v2h-2zM402 269h2v2h-2zM367 250h2v2h-2zM383 251h2v2h-2zM400 267h2v2h-2zM394 255h2v2h-2zM386 260h2v2h-2zM357 235h2v2h-2zM398 266h2v2h-2zM391 256h2v2h-2zM403 269h2v2h-2zM373 244h2v2h-2zM399 263h2v2h-2zM372 245h2v2h-2zM414 274h2v2h-2zM395 260h2v2h-2zM370 242h2v2h-2zM385 253h2v2h-2zM368 246h2v2h-2zM390 256h2v2h-2zM394 257h2v2h-2zM408 259h2v2h-2zM396 264h2v2h-2zM394 259h2v2h-2zM392 262h2v2h-2zM396 269h2v2h-2zM381 249h2v2h-2zM400 257h2v2h-2zM382 251h2v2h-2zM403 267h2v2h-2zM378 253h2v2h-2zM413 268h2v2h-2zM404 267h2v2h-2zM362 236h2v2h-2zM404 272h2v2h-2zM361 239h2v2h-2zM374 249h2v2h-2zM359 235h2v2h-2zM381 242h2v2h-2zM406 274h2v2h-2zM391 257h2v2h-2zM411 278h2v2h-2zM392 258h2v2h-2zM383 257h2v2h-2zM366 242h2v2h-2zM385 260h2v2h-2zM391 266h2v2h-2zM377 257h2v2h-2zM396 260h2v2h-2zM378 253h2v2h-2zM368 245h2v2h-2zM375 253h2v2h-2zM408 264h2v2h-2zM410 272h2v2h-2zM378 249h2v2h-2z"/><path fill="#ff1493" d="M435 267h2v2h-2zM443 271h2v2h-2zM404 251h2v2h-2zM417 263h2v2h-2zM411 251h2v2h-2zM447 273h2v2h-2zM420 257h2v2h-2zM396 241h2v2h-2zM410 250h2v2h-2zM438 268h2v2h-2zM397 241h2v2h-2zM437 265h2v2h-2zM394 242h2v2h-2zM399 241h2v2h-2zM402 228h2v2h-2zM422 258h2v2h-2zM402 246h2v2h-2zM398 242h2v2h-2zM420 254h2v2h-2zM410 249h2v2h-2zM397 233h2v2h-2zM448 268h2v2h-2zM416 258h2v2h-2zM412 255h2v2h-2zM417 256h2v2h-2zM430 266h2v2h-2zM427 255h2v2h-2zM415 253h2v2h-2zM417 255h2v2h-2zM443 266h2v2h-2zM429 258h2v2h-2zM421 261h2v2h-2zM440 267h2v2h-2zM442 273h2v2h-2zM403 245h2v2h-2zM408 249h2v2h-2zM429 271h2v2h-2zM418 253h2v2h-2zM419 254h2v2h-2zM398 236h2v2h-2zM401 247h2v2h-2zM428 264h2v2h-2zM436 266h2v2h-2zM442 268h2v2h-2zM441 265h2v2h-2zM436 268h2v2h-2zM450 273h2v2h-2zM438 268h2v2h-2zM450 268h2v2h-2zM436 261h2v2h-2zM420 260h2v2h-2zM426 259h2v2h-2zM409 244h2v2h-2zM394 233h2v2h-2zM424 259h2v2h-2zM430 266h2v2h-2zM412 252h2v2h-2zM397 234h2v2h-2zM438 269h2v2h-2zM410 250h2v2h-2zM419 257h2v2h-2zM427 264h2v2h-2zM422 261h2v2h-2zM418 255h2v2h-2zM409 254h2v2h-2zM405 240h2v2h-2zM424 259h2v2h-2zM413 251h2v2h-2zM403 242h2v2h-2zM446 268h2v2h-2zM413 255h2v2h-2zM411 249h2v2h-2zM438 265h2v2h-2zM421 258h2v2h-2zM412 252h2v2h-2zM401 238h2v2h-2zM422 256h2v2h-2zM437 265h2v2h-2zM401 244h2v2h-2zM449 268h2v2h-2zM400 250h2v2h-2zM425 263h2v2h-2zM431 261h2v2h-2zM397 246h2v2h-2zM427 263h2v2h-2zM422 262h2v2h-2zM422 259h2v2h-2zM433 262h2v2h-2zM403 243h2v2h-2zM446 269h2v2h-2zM418 260h2v2h-2zM423 262h2v2h-2zM428 263h2v2h-2zM444 266h2v2h-2zM409 247h2v2h-2zM423 262h2v2h-2zM399 243h2v2h-2zM451 268h2v2h-2zM394 239h2v2h-2zM399 240h2v2h-2zM421 255h2v2h-2zM419 262h2v2h-2zM437 263h2v2h-2zM404 248h2v2h-2zM408 244h2v2h-2zM445 264h2v2h-2zM431 258h2v2h-2zM424 260h2v2h-2zM403 250h2v2h-2zM429 267h2v2h-2zM414 254h2v2h-2zM433 269h2v2h-2zM426 262h2v2h-2zM450 275h2v2h-2zM431 264h2v2h-2zM406 240h2v2h-2zM407 244h2v2h-2zM425 261h2v2h-2zM449 266h2v2h-2zM411 247h2v2h-2zM449 266h2v2h-2zM449 271h2v2h-2zM402 243h2v2h-2zM401 238h2v2h-2zM401 242h2v2h-2zM424 261h2v2h-2zM437 269h2v2h-2z"/><path fill="#00f0b8" d="M490 259h2v2h-2zM490 260h2v2h-2zM478 256h2v2h-2zM441 251h2v2h-2zM437 248h2v2h-2zM439 244h2v2h-2zM469 267h2v2h-2zM448 257h2v2h-2zM488 263h2v2h-2zM437 252h2v2h-2zM449 259h2v2h-2zM446 259h2v2h-2zM473 256h2v2h-2zM460 263h2v2h-2zM462 257h2v2h-2zM448 256h2v2h-2zM440 257h2v2h-2zM453 260h2v2h-2zM443 254h2v2h-2zM455 263h2v2h-2zM442 253h2v2h-2zM445 252h2v2h-2zM486 260h2v2h-2zM460 252h2v2h-2zM434 245h2v2h-2zM436 247h2v2h-2zM443 260h2v2h-2zM438 250h2v2h-2zM493 253h2v2h-2zM491 252h2v2h-2zM434 245h2v2h-2zM493 267h2v2h-2zM467 267h2v2h-2zM479 257h2v2h-2zM489 252h2v2h-2zM459 256h2v2h-2zM451 267h2v2h-2zM446 260h2v2h-2zM490 256h2v2h-2zM444 258h2v2h-2zM454 262h2v2h-2zM460 265h2v2h-2zM445 260h2v2h-2zM462 252h2v2h-2zM440 247h2v2h-2zM478 256h2v2h-2zM446 251h2v2h-2zM436 242h2v2h-2zM435 229h2v2h-2zM447 258h2v2h-2zM471 260h2v2h-2zM468 266h2v2h-2zM445 247h2v2h-2zM488 254h2v2h-2zM474 260h2v2h-2zM437 252h2v2h-2zM436 254h2v2h-2zM468 259h2v2h-2zM470 258h2v2h-2zM453 262h2v2h-2zM478 261h2v2h-2zM446 261h2v2h-2zM473 254h2v2h-2zM466 263h2v2h-2zM467 259h2v2h-2zM484 262h2v2h-2zM444 257h2v2h-2zM483 253h2v2h-2zM480 264h2v2h-2zM488 254h2v2h-2zM438 252h2v2h-2zM469 258h2v2h-2zM440 259h2v2h-2zM456 262h2v2h-2zM479 252h2v2h-2zM467 266h2v2h-2zM451 260h2v2h-2zM471 255h2v2h-2zM444 263h2v2h-2zM434 246h2v2h-2zM478 255h2v2h-2zM459 259h2v2h-2zM438 251h2v2h-2zM444 260h2v2h-2zM492 260h2v2h-2zM485 261h2v2h-2zM491 250h2v2h-2zM477 244h2v2h-2zM476 254h2v2h-2zM463 258h2v2h-2zM454 250h2v2h-2zM489 262h2v2h-2zM485 255h2v2h-2zM482 260h2v2h-2zM443 249h2v2h-2zM487 260h2v2h-2zM481 257h2v2h-2zM461 255h2v2h-2zM471 254h2v2h-2zM435 241h2v2h-2zM483 259h2v2h-2zM470 265h2v2h-2zM442 253h2v2h-2zM473 256h2v2h-2zM453 257h2v2h-2zM487 256h2v2h-2zM473 268h2v2h-2zM453 256h2v2h-2zM480 259h2v2h-2zM481 258h2v2h-2zM451 257h2v2h-2zM475 252h2v2h-2zM436 247h2v2h-2zM461 261h2v2h-2zM481 259h2v2h-2zM443 268h2v2h-2zM489 261h2v2h-2zM457 259h2v2h-2zM472 262h2v2h-2zM453 257h2v2h-2zM450 259h2v2h-2zM455 243h2v2h-2zM458 260h2v2h-2zM449 261h2v2h-2zM461 264h2v2h-2zM458 259h2v2h-2zM472 259h2v2h-2z"/><path fill="#e0f000" d="M485 241h2v2h-2zM526 259h2v2h-2zM479 239h2v2h-2zM506 247h2v2h-2zM527 263h2v2h-2zM503 245h2v2h-2zM497 241h2v2h-2zM487 243h2v2h-2zM504 238h2v2h-2zM507 253h2v2h-2zM495 243h2v2h-2zM517 255h2v2h-2zM525 267h2v2h-2zM511 249h2v2h-2zM510 248h2v2h-2zM522 263h2v2h-2zM509 253h2v2h-2zM509 255h2v2h-2zM489 237h2v2h-2zM508 254h2v2h-2zM509 245h2v2h-2zM523 258h2v2h-2zM479 238h2v2h-2zM505 250h2v2h-2zM507 246h2v2h-2zM519 256h2v2h-2zM476 232h2v2h-2zM526 262h2v2h-2zM527 267h2v2h-2zM494 249h2v2h-2zM497 254h2v2h-2zM479 237h2v2h-2zM489 248h2v2h-2zM475 233h2v2h-2zM473 236h2v2h-2zM493 244h2v2h-2zM481 236h2v2h-2zM515 263h2v2h-2zM478 237h2v2h-2zM484 248h2v2h-2zM506 252h2v2h-2zM504 242h2v2h-2zM478 233h2v2h-2zM526 260h2v2h-2zM495 241h2v2h-2zM520 261h2v2h-2zM503 244h2v2h-2zM523 259h2v2h-2zM500 247h2v2h-2zM503 244h2v2h-2zM488 244h2v2h-2zM496 236h2v2h-2zM487 240h2v2h-2zM507 249h2v2h-2zM494 245h2v2h-2zM478 230h2v2h-2zM493 248h2v2h-2zM505 247h2v2h-2zM523 256h2v2h-2zM484 238h2v2h-2zM491 248h2v2h-2zM508 245h2v2h-2zM474 230h2v2h-2zM502 251h2v2h-2zM524 257h2v2h-2zM522 259h2v2h-2zM489 239h2v2h-2zM501 247h2v2h-2zM524 258h2v2h-2zM522 259h2v2h-2zM525 261h2v2h-2zM497 247h2v2h-2zM478 235h2v2h-2zM477 240h2v2h-2zM503 246h2v2h-2zM526 263h2v2h-2zM511 251h2v2h-2zM500 247h2v2h-2zM519 256h2v2h-2zM523 253h2v2h-2zM497 244h2v2h-2zM501 246h2v2h-2zM509 253h2v2h-2zM513 245h2v2h-2zM514 262h2v2h-2zM478 231h2v2h-2zM484 238h2v2h-2zM503 245h2v2h-2zM475 233h2v2h-2zM525 260h2v2h-2zM487 236h2v2h-2zM479 234h2v2h-2zM493 246h2v2h-2zM509 249h2v2h-2zM520 262h2v2h-2zM498 244h2v2h-2zM510 248h2v2h-2zM510 250h2v2h-2zM500 252h2v2h-2zM506 247h2v2h-2zM503 246h2v2h-2zM516 257h2v2h-2zM475 234h2v2h-2zM496 250h2v2h-2zM477 237h2v2h-2zM507 251h2v2h-2zM511 253h2v2h-2zM515 256h2v2h-2zM495 253h2v2h-2zM524 256h2v2h-2zM491 240h2v2h-2zM530 259h2v2h-2zM512 253h2v2h-2zM509 260h2v2h-2zM512 250h2v2h-2zM479 234h2v2h-2zM500 247h2v2h-2zM492 239h2v2h-2zM487 244h2v2h-2zM528 258h2v2h-2zM525 265h2v2h-2zM471 237h2v2h-2zM509 253h2v2h-2zM503 249h2v2h-2zM492 245h2v2h-2zM483 232h2v2h-2zM492 237h2v2h-2zM526 258h2v2h-2zM526 258h2v2h-2zM474 240h2v2h-2zM482 238h2v2h-2zM488 235h2v2h-2zM526 264h2v2h-2zM490 242h2v2h-2zM502 251h2v2h-2zM498 238h2v2h-2zM529 267h2v2h-2zM514 256h2v2h-2zM491 229h2v2h-2zM500 252h2v2h-2zM497 254h2v2h-2zM505 244h2v2h-2z"/><path fill="#a020f0" d="M522 236h2v2h-2zM519 233h2v2h-2zM552 249h2v2h-2zM515 236h2v2h-2zM515 232h2v2h-2zM526 240h2v2h-2zM524 234h2v2h-2zM564 274h2v2h-2zM558 257h2v2h-2zM563 266h2v2h-2zM513 235h2v2h-2zM526 231h2v2h-2zM548 245h2v2h-2zM519 236h2v2h-2zM560 268h2v2h-2zM524 237h2v2h-2zM564 277h2v2h-2zM546 241h2v2h-2zM565 267h2v2h-2zM557 256h2v2h-2zM563 267h2v2h-2zM520 234h2v2h-2zM562 262h2v2h-2zM552 245h2v2h-2zM556 259h2v2h-2zM522 238h2v2h-2zM523 235h2v2h-2zM547 246h2v2h-2zM555 251h2v2h-2zM558 261h2v2h-2zM530 238h2v2h-2zM520 240h2v2h-2zM524 238h2v2h-2zM549 249h2v2h-2zM527 237h2v2h-2zM554 247h2v2h-2zM520 235h2v2h-2zM562 266h2v2h-2zM561 272h2v2h-2zM561 264h2v2h-2zM534 243h2v2h-2zM513 242h2v2h-2zM535 238h2v2h-2zM558 261h2v2h-2zM557 265h2v2h-2zM545 246h2v2h-2zM558 251h2v2h-2zM555 257h2v2h-2zM561 266h2v2h-2zM528 241h2v2h-2zM555 255h2v2h-2zM541 246h2v2h-2zM557 258h2v2h-2zM548 242h2v2h-2zM565 273h2v2h-2zM549 247h2v2h-2zM557 257h2v2h-2zM567 275h2v2h-2zM565 274h2v2h-2zM543 248h2v2h-2zM516 241h2v2h-2zM521 235h2v2h-2zM551 249h2v2h-2zM567 280h2v2h-2zM531 244h2v2h-2zM537 242h2v2h-2zM533 233h2v2h-2zM552 242h2v2h-2zM511 229h2v2h-2zM523 240h2v2h-2zM557 254h2v2h-2zM509 225h2v2h-2zM518 234h2v2h-2zM563 275h2v2h-2zM552 247h2v2h-2zM521 231h2v2h-2zM556 242h2v2h-2zM537 241h2v2h-2zM513 232h2v2h-2zM525 239h2v2h-2zM538 233h2v2h-2zM566 275h2v2h-2zM543 249h2v2h-2zM526 233h2v2h-2zM516 226h2v2h-2zM527 232h2v2h-2zM521 237h2v2h-2zM537 245h2v2h-2zM528 235h2v2h-2zM524 237h2v2h-2zM558 250h2v2h-2zM524 230h2v2h-2zM547 243h2v2h-2zM563 275h2v2h-2zM557 253h2v2h-2zM539 238h2v2h-2zM539 246h2v2h-2zM536 242h2v2h-2zM522 230h2v2h-2zM517 242h2v2h-2zM562 264h2v2h-2zM545 239h2v2h-2zM518 237h2v2h-2zM521 237h2v2h-2zM550 247h2v2h-2zM513 236h2v2h-2zM521 236h2v2h-2zM511 232h2v2h-2zM557 255h2v2h-2zM530 239h2v2h-2zM518 234h2v2h-2zM555 250h2v2h-2zM554 255h2v2h-2zM530 239h2v2h-2zM564 269h2v2h-2zM528 238h2v2h-2zM548 246h2v2h-2zM547 241h2v2h-2zM563 276h2v2h-2zM520 236h2v2h-2zM559 271h2v2h-2zM555 258h2v2h-2zM546 241h2v2h-2zM552 242h2v2h-2zM539 246h2v2h-2zM554 253h2v2h-2zM509 227h2v2h-2z"/><path fill="#fff" d="M120 364h5v1h-5zM689 364h-5v1h5zM120 359h5v1h-5zM689 359h-5v1h5zM120 354h5v1h-5zM689 354h-5v1h5zM120 348h5v1h-5zM689 348h-5v1h5zM120 343h11v1h-11zM689 343h-11v1h11zM120 338h5v1h-5zM689 338h-5v1h5zM120 333h5v1h-5zM689 333h-5v1h5zM120 327h5v1h-5zM689 327h-5v1h5zM120 322h5v1h-5zM689 322h-5v1h5zM120 317h5v1h-5zM689 317h-5v1h5zM120 312h5v1h-5zM689 312h-5v1h5zM120 306h5v1h-5zM689 306h-5v1h5zM120 301h5v1h-5zM689 301h-5v1h5zM120 296h5v1h-5zM689 296h-5v1h5zM120 290h11v1h-11zM689 290h-11v1h11zM120 285h5v1h-5zM689 285h-5v1h5zM120 280h5v1h-5zM689 280h-5v1h5zM120 275h5v1h-5zM689 275h-5v1h5zM120 269h5v1h-5zM689 269h-5v1h5zM120 264h5v1h-5zM689 264h-5v1h5zM120 259h5v1h-5zM689 259h-5v1h5zM120 254h5v1h-5zM689 254h-5v1h5zM120 248h5v1h-5zM689 248h-5v1h5zM120 243h5v1h-5zM689 243h-5v1h5zM120 238h11v1h-11zM689 238h-11v1h11zM120 233h5v1h-5zM689 233h-5v1h5zM120 227h5v1h-5zM689 227h-5v1h5zM120 222h5v1h-5zM689 222h-5v1h5zM120 217h5v1h-5zM689 217h-5v1h5zM120 211h5v1h-5zM689 211h-5v1h5zM120 206h5v1h-5zM689 206h-5v1h5zM120 201h5v1h-5zM689 201h-5v1h5zM120 196h5v1h-5zM689 196h-5v1h5zM120 190h5v1h-5zM689 190h-5v1h5zM120 185h11v1h-11zM689 185h-11v1h11zM120 180h5v1h-5zM689 180h-5v1h5zM120 175h5v1h-5zM689 175h-5v1h5zM120 169h5v1h-5zM689 169h-5v1h5zM120 164h5v1h-5zM689 164h-5v1h5zM120 159h5v1h-5zM689 159h-5v1h5zM120 154h5v1h-5zM689 154h-5v1h5zM120 148h5v1h-5zM689 148h-5v1h5zM130 367v-4h1v4zM130 146v4h1v-4zM158 367v-2h1v2zM158 146v2h1v-2zM186 367v-2h1v2zM186 146v2h1v-2zM213 367v-2h1v2zM213 146v2h1v-2zM241 367v-2h1v2zM241 146v2h1v-2zM269 367v-4h1v4zM269 146v4h1v-4zM297 367v-2h1v2zM297 146v2h1v-2zM325 367v-2h1v2zM325 146v2h1v-2zM353 367v-2h1v2zM353 146v2h1v-2zM381 367v-2h1v2zM381 146v2h1v-2zM408 367v-4h1v4zM408 146v4h1v-4zM436 367v-2h1v2zM436 146v2h1v-2zM464 367v-2h1v2zM464 146v2h1v-2zM492 367v-2h1v2zM492 146v2h1v-2zM520 367v-2h1v2zM520 146v2h1v-2zM548 367v-4h1v4zM548 146v4h1v-4zM576 367v-2h1v2zM576 146v2h1v-2zM603 367v-2h1v2zM603 146v2h1v-2zM631 367v-2h1v2zM631 146v2h1v-2zM659 367v-2h1v2zM659 146v2h1v-2zM687 367v-4h1v4zM687 146v4h1v-4z"/><path fill="none" stroke="#fff" stroke-width="1" d="M119.5 145.5H689.5V367.5H119.5Z"/><text font-family="Liberation Sans" fill="#fff" stroke="#000" stroke-width="0.3" font-size="19" x="117" y="137" word-spacing="7" textLength="573" lengthAdjust="spacingAndGlyphs">Pipeline 'AAR' TDT 55601812 200500 JUPITER AOT L03</text><text font-family="Liberation Sans" fill="#fff" stroke="#000" stroke-width="0.3" font-size="17" x="104" y="350" textLength="8" lengthAdjust="spacingAndGlyphs">8</text><text font-family="Liberation Sans" fill="#fff" stroke="#000" stroke-width="0.3" font-size="17" x="104" y="297" textLength="8" lengthAdjust="spacingAndGlyphs">9</text><text font-family="Liberation Sans" fill="#fff" stroke="#000" stroke-width="0.3" font-size="17" x="95" y="245" textLength="17" lengthAdjust="spacingAndGlyphs">10</text><text font-family="Liberation Sans" fill="#fff" stroke="#000" stroke-width="0.3" font-size="17" x="95" y="192" textLength="17" lengthAdjust="spacingAndGlyphs">11</text><text font-family="Liberation Sans" fill="#fff" stroke="#000" stroke-width="0.3" font-size="17" x="108" y="391" textLength="44" lengthAdjust="spacingAndGlyphs">120.0</text><text font-family="Liberation Sans" fill="#fff" stroke="#000" stroke-width="0.3" font-size="17" x="247" y="391" textLength="44" lengthAdjust="spacingAndGlyphs">120.5</text><text font-family="Liberation Sans" fill="#fff" stroke="#000" stroke-width="0.3" font-size="17" x="386" y="391" textLength="44" lengthAdjust="spacingAndGlyphs">121.0</text><text font-family="Liberation Sans" fill="#fff" stroke="#000" stroke-width="0.3" font-size="17" x="526" y="391" textLength="44" lengthAdjust="spacingAndGlyphs">121.5</text><text font-family="Liberation Sans" fill="#fff" stroke="#000" stroke-width="0.3" font-size="17" x="665" y="391" textLength="44" lengthAdjust="spacingAndGlyphs">122.0</text><text font-family="Liberation Sans" fill="#fff" stroke="#000" stroke-width="0.3" font-size="16" x="330" y="409" textLength="89" lengthAdjust="spacingAndGlyphs">Wavelength</text><rect fill="#fff" x="429" y="404" width="8" height="1"/><text font-family="Liberation Sans" fill="#fff" stroke="#000" stroke-width="0.3" font-size="16" x="450" y="409" textLength="27" lengthAdjust="spacingAndGlyphs">&#956;m</text><path stroke="#fff" stroke-width="1" d="M63.5 333.5L82.5 343.5"/><g transform="rotate(-90)"><text font-family="Liberation Sans" fill="#fff" stroke="#000" stroke-width="0.3" font-size="16" x="-383" y="78" textLength="30" lengthAdjust="spacingAndGlyphs">Flux</text><text font-family="Liberation Sans" fill="#fff" stroke="#000" stroke-width="0.3" font-size="16" x="-320.5" y="78" textLength="19.5" lengthAdjust="spacingAndGlyphs">10</text><text font-family="Liberation Sans" fill="#fff" stroke="#000" stroke-width="0.3" font-size="12" x="-297" y="70" textLength="16" lengthAdjust="spacingAndGlyphs">&#8722;15</text><text font-family="Liberation Sans" fill="#fff" stroke="#000" stroke-width="0.3" font-size="16" x="-273.5" y="78" textLength="43.5" lengthAdjust="spacingAndGlyphs">Watts</text><text font-family="Liberation Sans" fill="#fff" stroke="#000" stroke-width="0.3" font-size="16" x="-220" y="78" textLength="23.5" lengthAdjust="spacingAndGlyphs">cm</text><text font-family="Liberation Sans" fill="#fff" stroke="#000" stroke-width="0.3" font-size="12" x="-194.5" y="70" textLength="14.5" lengthAdjust="spacingAndGlyphs">&#8722;2</text><text font-family="Liberation Sans" fill="#fff" stroke="#000" stroke-width="0.3" font-size="16" x="-172" y="78" textLength="25.5" lengthAdjust="spacingAndGlyphs">&#956;m</text><text font-family="Liberation Sans" fill="#fff" stroke="#000" stroke-width="0.3" font-size="12" x="-144.5" y="70" textLength="13.5" lengthAdjust="spacingAndGlyphs">&#8722;1</text></g></svg>
<div class="abs etch" style="left:722px;top:116px;width:174px;height:355px;"></div>
<div class="abs etch" style="left:727px;top:121px;width:164px;height:21px;"></div>
<div class="abs mono" style="left:761px;top:124px;">X:&nbsp;&nbsp;&nbsp;&nbsp;&nbsp;&nbsp;&nbsp;120.186</div>
<div class="abs etch" style="left:727px;top:145px;width:164px;height:21px;"></div>
<div class="abs mono" style="left:761px;top:148px;">Y:&nbsp;&nbsp;&nbsp;&nbsp;&nbsp;&nbsp;&nbsp;7.22423</div>
<div class="abs etch" style="left:727px;top:169px;width:164px;height:213px;"></div>
<div class="abs chk" style="left:740px;top:182px;width:10px;height:10px;"></div>
<div class="abs mono" style="left:755px;top:180px;">Freeze&nbsp;Ranges</div>
<div class="abs mono" style="left:736px;top:217px;">Xmin</div>
<div class="abs etch" style="left:766px;top:207px;width:76px;height:34px;"></div>
<div class="abs fld" style="left:770px;top:211px;width:68px;height:26px;"></div>
<div class="abs mono" style="left:776px;top:217px;">119.960</div>
<svg class="abs" style="left:775px;top:218px" width="3" height="13" viewBox="0 0 3 13"><path fill="#000" d="M0 0h1v1h-1zM2 0h1v1h-1zM1 1h1v1h-1zM1 11h1v1h-1zM0 12h1v1h-1zM2 12h1v1h-1zM2 2h1v1h-1zM2 3h1v1h-1zM2 4h1v1h-1zM2 5h1v1h-1zM2 6h1v1h-1zM2 7h1v1h-1zM2 8h1v1h-1zM2 9h1v1h-1zM2 10h1v1h-1zM1 2h1v1h-1zM1 4h1v1h-1zM1 6h1v1h-1zM1 8h1v1h-1zM1 10h1v1h-1z"/></svg>
<div class="abs mono" style="left:736px;top:261px;">Xmax</div>
<div class="abs etch" style="left:766px;top:251px;width:76px;height:34px;"></div>
<div class="abs fld" style="left:770px;top:255px;width:68px;height:26px;"></div>
<div class="abs mono" style="left:776px;top:261px;">122.004</div>
<svg class="abs" style="left:775px;top:262px" width="3" height="13" viewBox="0 0 3 13"><path fill="#000" d="M0 0h1v1h-1zM2 0h1v1h-1zM1 1h1v1h-1zM1 11h1v1h-1zM0 12h1v1h-1zM2 12h1v1h-1zM2 2h1v1h-1zM2 3h1v1h-1zM2 4h1v1h-1zM2 5h1v1h-1zM2 6h1v1h-1zM2 7h1v1h-1zM2 8h1v1h-1zM2 9h1v1h-1zM2 10h1v1h-1zM1 2h1v1h-1zM1 4h1v1h-1zM1 6h1v1h-1zM1 8h1v1h-1zM1 10h1v1h-1z"/></svg>
<div class="abs mono" style="left:736px;top:305px;">Ymin</div>
<div class="abs etch" style="left:766px;top:295px;width:76px;height:34px;"></div>
<div class="abs fld" style="left:770px;top:299px;width:68px;height:26px;"></div>
<div class="abs mono" style="left:776px;top:305px;">7.52897</div>
<svg class="abs" style="left:775px;top:306px" width="3" height="13" viewBox="0 0 3 13"><path fill="#000" d="M0 0h1v1h-1zM2 0h1v1h-1zM1 1h1v1h-1zM1 11h1v1h-1zM0 12h1v1h-1zM2 12h1v1h-1zM2 2h1v1h-1zM2 3h1v1h-1zM2 4h1v1h-1zM2 5h1v1h-1zM2 6h1v1h-1zM2 7h1v1h-1zM2 8h1v1h-1zM2 9h1v1h-1zM2 10h1v1h-1zM1 2h1v1h-1zM1 4h1v1h-1zM1 6h1v1h-1zM1 8h1v1h-1zM1 10h1v1h-1z"/></svg>
<div class="abs mono" style="left:736px;top:349px;">Ymax</div>
<div class="abs etch" style="left:766px;top:339px;width:76px;height:34px;"></div>
<div class="abs fld" style="left:770px;top:343px;width:68px;height:26px;"></div>
<div class="abs mono" style="left:776px;top:349px;">11.7568</div>
<svg class="abs" style="left:775px;top:350px" width="3" height="13" viewBox="0 0 3 13"><path fill="#000" d="M0 0h1v1h-1zM2 0h1v1h-1zM1 1h1v1h-1zM1 11h1v1h-1zM0 12h1v1h-1zM2 12h1v1h-1zM2 2h1v1h-1zM2 3h1v1h-1zM2 4h1v1h-1zM2 5h1v1h-1zM2 6h1v1h-1zM2 7h1v1h-1zM2 8h1v1h-1zM2 9h1v1h-1zM2 10h1v1h-1zM1 2h1v1h-1zM1 4h1v1h-1zM1 6h1v1h-1zM1 8h1v1h-1zM1 10h1v1h-1z"/></svg>
<div class="abs btn" style="left:729px;top:387px;width:160px;height:21px;"></div>
<div class="abs mono" style="left:779px;top:390px;">Replot&nbsp;Max</div>
<div class="abs btn" style="left:729px;top:415px;width:160px;height:21px;"></div>
<div class="abs mono ins" style="left:791px;top:418px;">Unzoom</div>
<div class="abs btn" style="left:729px;top:443px;width:160px;height:21px;"></div>
<div class="abs mono" style="left:782px;top:446px;">Hard&nbsp;Copy</div>
<div class="abs etch" style="left:8px;top:485px;width:899px;height:377px;"></div>
<div class="abs" style="left:19px;top:496px;width:700px;height:312px;background:#000"></div>
<svg class="abs" style="left:19px;top:496px" width="700" height="312" viewBox="19 496 700 312"><path fill="#ff0000" d="M144 621h2v2h-2zM135 629h2v2h-2zM125 640h2v2h-2zM120 637h2v2h-2zM133 632h2v2h-2zM140 622h2v2h-2zM145 619h2v2h-2zM135 631h2v2h-2zM131 630h2v2h-2zM137 631h2v2h-2zM142 626h2v2h-2zM119 638h2v2h-2zM128 637h2v2h-2zM140 627h2v2h-2zM141 623h2v2h-2zM132 621h2v2h-2zM125 640h2v2h-2zM120 633h2v2h-2zM138 620h2v2h-2zM140 626h2v2h-2zM124 638h2v2h-2zM144 625h2v2h-2zM132 629h2v2h-2zM127 634h2v2h-2zM130 621h2v2h-2zM137 622h2v2h-2zM136 631h2v2h-2zM138 624h2v2h-2zM122 642h2v2h-2zM142 624h2v2h-2zM135 634h2v2h-2zM132 631h2v2h-2zM131 638h2v2h-2zM126 640h2v2h-2zM131 629h2v2h-2zM137 626h2v2h-2zM129 642h2v2h-2zM143 619h2v2h-2zM135 631h2v2h-2zM127 641h2v2h-2zM130 633h2v2h-2zM127 637h2v2h-2zM126 636h2v2h-2zM131 630h2v2h-2zM143 622h2v2h-2zM147 623h2v2h-2zM128 640h2v2h-2zM121 642h2v2h-2zM129 633h2v2h-2zM125 635h2v2h-2zM122 644h2v2h-2zM131 629h2v2h-2zM141 623h2v2h-2zM124 637h2v2h-2zM130 630h2v2h-2zM141 627h2v2h-2zM139 639h2v2h-2zM146 626h2v2h-2zM141 626h2v2h-2zM138 626h2v2h-2zM130 636h2v2h-2zM141 626h2v2h-2zM128 635h2v2h-2zM143 624h2v2h-2zM134 624h2v2h-2zM145 622h2v2h-2zM142 625h2v2h-2zM123 640h2v2h-2zM138 629h2v2h-2zM135 627h2v2h-2zM135 632h2v2h-2zM123 642h2v2h-2zM139 626h2v2h-2zM129 640h2v2h-2zM133 629h2v2h-2zM145 618h2v2h-2zM143 616h2v2h-2zM140 624h2v2h-2zM123 639h2v2h-2zM142 624h2v2h-2zM130 627h2v2h-2zM137 639h2v2h-2zM134 649h2v2h-2zM140 653h2v2h-2zM135 655h2v2h-2zM132 668h2v2h-2zM133 669h2v2h-2zM129 672h2v2h-2zM127 675h2v2h-2zM125 685h2v2h-2zM126 685h2v2h-2zM122 691h2v2h-2zM121 702h2v2h-2zM121 640h2v2h-2zM122 646h2v2h-2zM124 652h2v2h-2zM121 655h2v2h-2zM126 648h2v2h-2zM551 620h2v2h-2zM590 622h2v2h-2zM595 625h2v2h-2zM604 622h2v2h-2zM559 614h2v2h-2zM588 624h2v2h-2zM575 611h2v2h-2zM549 625h2v2h-2zM556 617h2v2h-2zM547 623h2v2h-2zM583 616h2v2h-2zM574 616h2v2h-2zM590 623h2v2h-2zM567 614h2v2h-2zM571 613h2v2h-2zM581 621h2v2h-2zM564 618h2v2h-2zM584 615h2v2h-2zM576 612h2v2h-2zM595 618h2v2h-2zM580 617h2v2h-2zM548 620h2v2h-2zM595 615h2v2h-2zM585 623h2v2h-2zM592 618h2v2h-2zM566 610h2v2h-2zM573 621h2v2h-2zM570 610h2v2h-2zM598 623h2v2h-2zM582 622h2v2h-2zM577 618h2v2h-2zM592 619h2v2h-2zM602 617h2v2h-2zM555 620h2v2h-2zM568 612h2v2h-2zM565 617h2v2h-2zM557 617h2v2h-2zM558 611h2v2h-2zM579 609h2v2h-2zM601 625h2v2h-2zM563 609h2v2h-2zM599 620h2v2h-2zM578 620h2v2h-2zM584 614h2v2h-2zM598 629h2v2h-2zM582 609h2v2h-2zM575 611h2v2h-2zM582 617h2v2h-2zM562 611h2v2h-2zM570 613h2v2h-2zM587 623h2v2h-2zM552 644h2v2h-2zM563 608h2v2h-2zM566 616h2v2h-2zM549 619h2v2h-2zM596 624h2v2h-2zM593 621h2v2h-2zM563 619h2v2h-2zM550 625h2v2h-2zM552 622h2v2h-2zM549 623h2v2h-2zM594 623h2v2h-2zM600 629h2v2h-2zM581 619h2v2h-2zM585 619h2v2h-2zM598 627h2v2h-2zM605 619h2v2h-2zM593 628h2v2h-2zM547 618h2v2h-2zM591 620h2v2h-2zM563 617h2v2h-2zM550 625h2v2h-2zM600 624h2v2h-2zM559 616h2v2h-2zM574 617h2v2h-2zM555 622h2v2h-2zM597 622h2v2h-2zM573 612h2v2h-2zM564 615h2v2h-2zM576 614h2v2h-2zM595 624h2v2h-2zM597 619h2v2h-2zM573 611h2v2h-2zM571 619h2v2h-2zM577 619h2v2h-2zM565 612h2v2h-2zM549 626h2v2h-2zM552 614h2v2h-2zM562 613h2v2h-2zM548 622h2v2h-2zM551 621h2v2h-2zM583 619h2v2h-2zM555 614h2v2h-2zM547 624h2v2h-2zM598 624h2v2h-2zM552 632h2v2h-2zM582 618h2v2h-2zM600 630h2v2h-2zM582 617h2v2h-2zM599 626h2v2h-2zM568 617h2v2h-2zM599 631h2v2h-2zM575 617h2v2h-2zM560 615h2v2h-2zM592 638h2v2h-2zM601 629h2v2h-2zM570 613h2v2h-2zM598 625h2v2h-2zM568 610h2v2h-2zM583 616h2v2h-2zM577 612h2v2h-2zM581 619h2v2h-2zM584 620h2v2h-2zM562 614h2v2h-2zM585 620h2v2h-2zM548 623h2v2h-2zM583 618h2v2h-2zM548 621h2v2h-2zM591 621h2v2h-2zM579 618h2v2h-2zM583 598h2v2h-2zM584 619h2v2h-2zM597 624h2v2h-2zM545 627h2v2h-2zM599 624h2v2h-2zM601 627h2v2h-2zM577 617h2v2h-2zM548 620h2v2h-2zM560 614h2v2h-2zM577 617h2v2h-2zM573 619h2v2h-2zM596 616h2v2h-2zM552 625h2v2h-2zM575 618h2v2h-2zM584 622h2v2h-2zM558 584h2v2h-2z"/><path fill="#00ff00" d="M173 628h2v2h-2zM141 633h2v2h-2zM185 613h2v2h-2zM165 633h2v2h-2zM135 637h2v2h-2zM159 643h2v2h-2zM131 630h2v2h-2zM178 620h2v2h-2zM133 630h2v2h-2zM165 635h2v2h-2zM160 633h2v2h-2zM176 629h2v2h-2zM180 623h2v2h-2zM134 635h2v2h-2zM160 634h2v2h-2zM144 633h2v2h-2zM137 635h2v2h-2zM166 626h2v2h-2zM135 631h2v2h-2zM157 635h2v2h-2zM173 626h2v2h-2zM131 634h2v2h-2zM153 639h2v2h-2zM138 634h2v2h-2zM179 622h2v2h-2zM171 624h2v2h-2zM184 618h2v2h-2zM144 634h2v2h-2zM167 629h2v2h-2zM153 634h2v2h-2zM150 636h2v2h-2zM146 635h2v2h-2zM181 615h2v2h-2zM144 634h2v2h-2zM186 615h2v2h-2zM132 632h2v2h-2zM181 604h2v2h-2zM185 613h2v2h-2zM172 628h2v2h-2zM178 625h2v2h-2zM176 627h2v2h-2zM135 632h2v2h-2zM132 637h2v2h-2zM174 625h2v2h-2zM180 621h2v2h-2zM146 630h2v2h-2zM173 626h2v2h-2zM167 634h2v2h-2zM181 621h2v2h-2zM181 622h2v2h-2zM182 627h2v2h-2zM166 634h2v2h-2zM161 635h2v2h-2zM176 629h2v2h-2zM128 632h2v2h-2zM138 636h2v2h-2zM168 635h2v2h-2zM138 634h2v2h-2zM163 637h2v2h-2zM152 636h2v2h-2zM148 635h2v2h-2zM180 621h2v2h-2zM133 635h2v2h-2zM136 631h2v2h-2zM160 636h2v2h-2zM130 633h2v2h-2zM169 634h2v2h-2zM149 636h2v2h-2zM183 614h2v2h-2zM178 624h2v2h-2zM176 624h2v2h-2zM184 621h2v2h-2zM142 634h2v2h-2zM178 621h2v2h-2zM182 622h2v2h-2zM142 635h2v2h-2zM165 640h2v2h-2zM133 633h2v2h-2zM177 624h2v2h-2zM174 632h2v2h-2zM149 632h2v2h-2zM184 619h2v2h-2zM138 634h2v2h-2zM163 639h2v2h-2zM156 633h2v2h-2zM173 625h2v2h-2zM177 625h2v2h-2zM159 634h2v2h-2zM151 630h2v2h-2zM171 631h2v2h-2zM166 635h2v2h-2zM141 635h2v2h-2zM176 630h2v2h-2zM139 636h2v2h-2zM170 634h2v2h-2zM183 621h2v2h-2zM148 634h2v2h-2zM171 628h2v2h-2zM166 634h2v2h-2zM173 631h2v2h-2zM139 637h2v2h-2zM133 635h2v2h-2zM164 639h2v2h-2zM174 627h2v2h-2zM176 628h2v2h-2zM175 630h2v2h-2zM149 638h2v2h-2zM137 634h2v2h-2zM171 632h2v2h-2zM174 628h2v2h-2zM146 635h2v2h-2zM166 634h2v2h-2zM145 640h2v2h-2zM161 634h2v2h-2zM152 639h2v2h-2zM179 626h2v2h-2zM174 632h2v2h-2zM167 632h2v2h-2zM172 629h2v2h-2zM168 635h2v2h-2zM175 629h2v2h-2zM140 636h2v2h-2zM160 634h2v2h-2zM163 634h2v2h-2zM169 634h2v2h-2zM171 632h2v2h-2zM129 635h2v2h-2zM157 639h2v2h-2zM144 635h2v2h-2zM128 635h2v2h-2zM170 633h2v2h-2zM178 625h2v2h-2zM176 626h2v2h-2zM181 622h2v2h-2zM163 641h2v2h-2zM136 634h2v2h-2zM145 636h2v2h-2zM127 635h2v2h-2zM165 639h2v2h-2zM184 614h2v2h-2zM143 637h2v2h-2zM157 644h2v2h-2zM176 627h2v2h-2zM180 621h2v2h-2zM179 624h2v2h-2zM176 631h2v2h-2zM138 635h2v2h-2zM148 633h2v2h-2zM174 630h2v2h-2zM142 641h2v2h-2zM632 636h2v2h-2zM597 633h2v2h-2zM590 630h2v2h-2zM587 620h2v2h-2zM596 631h2v2h-2zM631 629h2v2h-2zM628 633h2v2h-2zM603 630h2v2h-2zM589 631h2v2h-2zM603 631h2v2h-2zM639 635h2v2h-2zM639 633h2v2h-2zM614 627h2v2h-2zM617 632h2v2h-2zM609 623h2v2h-2zM622 632h2v2h-2zM622 631h2v2h-2zM629 635h2v2h-2zM620 631h2v2h-2zM606 632h2v2h-2zM606 640h2v2h-2zM617 632h2v2h-2zM590 626h2v2h-2zM607 638h2v2h-2zM609 628h2v2h-2zM628 634h2v2h-2zM615 632h2v2h-2zM596 626h2v2h-2zM641 631h2v2h-2zM615 629h2v2h-2zM604 628h2v2h-2zM632 635h2v2h-2zM621 635h2v2h-2zM605 635h2v2h-2zM625 632h2v2h-2zM622 632h2v2h-2zM603 633h2v2h-2zM593 633h2v2h-2zM594 626h2v2h-2zM608 629h2v2h-2zM631 636h2v2h-2zM606 631h2v2h-2zM634 635h2v2h-2zM638 638h2v2h-2zM630 629h2v2h-2zM594 625h2v2h-2zM588 622h2v2h-2zM600 628h2v2h-2zM629 635h2v2h-2zM627 639h2v2h-2zM589 619h2v2h-2zM625 629h2v2h-2zM610 632h2v2h-2zM618 634h2v2h-2zM635 643h2v2h-2zM617 635h2v2h-2zM630 634h2v2h-2zM636 635h2v2h-2zM634 632h2v2h-2zM611 630h2v2h-2zM631 631h2v2h-2zM600 629h2v2h-2zM638 645h2v2h-2zM617 627h2v2h-2zM603 632h2v2h-2zM621 630h2v2h-2zM598 629h2v2h-2zM635 633h2v2h-2zM610 628h2v2h-2zM635 634h2v2h-2zM609 626h2v2h-2zM638 636h2v2h-2zM609 630h2v2h-2zM610 632h2v2h-2zM585 630h2v2h-2zM587 623h2v2h-2zM625 635h2v2h-2zM602 629h2v2h-2zM609 629h2v2h-2zM617 633h2v2h-2zM638 636h2v2h-2zM614 633h2v2h-2zM603 626h2v2h-2zM633 648h2v2h-2zM606 633h2v2h-2zM594 634h2v2h-2zM632 634h2v2h-2zM638 635h2v2h-2zM639 638h2v2h-2zM637 641h2v2h-2zM598 628h2v2h-2zM638 637h2v2h-2zM587 626h2v2h-2zM640 635h2v2h-2zM617 632h2v2h-2zM629 629h2v2h-2zM612 631h2v2h-2zM599 625h2v2h-2zM586 625h2v2h-2zM614 635h2v2h-2zM591 627h2v2h-2zM618 629h2v2h-2zM587 623h2v2h-2zM605 620h2v2h-2zM586 619h2v2h-2zM636 637h2v2h-2zM620 636h2v2h-2zM585 635h2v2h-2zM587 629h2v2h-2zM601 630h2v2h-2zM590 627h2v2h-2zM624 633h2v2h-2zM597 627h2v2h-2zM629 641h2v2h-2zM593 628h2v2h-2zM601 628h2v2h-2zM595 629h2v2h-2zM603 631h2v2h-2zM610 630h2v2h-2zM625 637h2v2h-2zM596 628h2v2h-2zM614 630h2v2h-2zM614 633h2v2h-2zM587 620h2v2h-2zM624 632h2v2h-2zM606 632h2v2h-2zM591 626h2v2h-2zM610 631h2v2h-2zM635 636h2v2h-2zM637 637h2v2h-2zM587 630h2v2h-2zM592 630h2v2h-2zM624 633h2v2h-2zM638 637h2v2h-2zM594 629h2v2h-2zM588 626h2v2h-2zM610 627h2v2h-2zM609 634h2v2h-2zM618 634h2v2h-2zM630 638h2v2h-2zM599 630h2v2h-2zM586 627h2v2h-2zM584 602h2v2h-2z"/><path fill="#0000ff" d="M169 629h2v2h-2zM168 620h2v2h-2zM176 625h2v2h-2zM213 617h2v2h-2zM200 619h2v2h-2zM214 623h2v2h-2zM169 629h2v2h-2zM222 628h2v2h-2zM193 622h2v2h-2zM217 623h2v2h-2zM208 618h2v2h-2zM176 622h2v2h-2zM216 621h2v2h-2zM205 629h2v2h-2zM194 618h2v2h-2zM182 625h2v2h-2zM190 616h2v2h-2zM170 626h2v2h-2zM194 621h2v2h-2zM176 614h2v2h-2zM198 623h2v2h-2zM204 619h2v2h-2zM174 627h2v2h-2zM193 625h2v2h-2zM183 624h2v2h-2zM174 623h2v2h-2zM210 633h2v2h-2zM210 619h2v2h-2zM184 623h2v2h-2zM195 620h2v2h-2zM168 628h2v2h-2zM211 620h2v2h-2zM170 621h2v2h-2zM183 619h2v2h-2zM186 618h2v2h-2zM175 622h2v2h-2zM175 620h2v2h-2zM191 618h2v2h-2zM190 620h2v2h-2zM185 617h2v2h-2zM172 624h2v2h-2zM199 620h2v2h-2zM220 628h2v2h-2zM203 626h2v2h-2zM196 618h2v2h-2zM181 623h2v2h-2zM175 624h2v2h-2zM205 622h2v2h-2zM180 624h2v2h-2zM167 621h2v2h-2zM212 618h2v2h-2zM214 617h2v2h-2zM181 626h2v2h-2zM195 619h2v2h-2zM217 622h2v2h-2zM214 622h2v2h-2zM174 620h2v2h-2zM174 623h2v2h-2zM214 619h2v2h-2zM189 626h2v2h-2zM193 620h2v2h-2zM218 620h2v2h-2zM219 627h2v2h-2zM208 623h2v2h-2zM196 619h2v2h-2zM174 622h2v2h-2zM184 620h2v2h-2zM184 625h2v2h-2zM170 624h2v2h-2zM209 625h2v2h-2zM216 627h2v2h-2zM215 624h2v2h-2zM186 626h2v2h-2zM194 614h2v2h-2zM167 623h2v2h-2zM177 623h2v2h-2zM193 620h2v2h-2zM206 620h2v2h-2zM194 621h2v2h-2zM220 627h2v2h-2zM191 619h2v2h-2zM206 619h2v2h-2zM209 617h2v2h-2zM187 617h2v2h-2zM198 620h2v2h-2zM188 621h2v2h-2zM173 629h2v2h-2zM188 604h2v2h-2zM203 618h2v2h-2zM165 633h2v2h-2zM219 623h2v2h-2zM201 623h2v2h-2zM167 618h2v2h-2zM213 626h2v2h-2zM193 623h2v2h-2zM193 619h2v2h-2zM198 623h2v2h-2zM209 608h2v2h-2zM188 617h2v2h-2zM213 618h2v2h-2zM215 628h2v2h-2zM180 618h2v2h-2zM213 622h2v2h-2zM193 629h2v2h-2zM165 603h2v2h-2zM188 617h2v2h-2zM201 619h2v2h-2zM170 625h2v2h-2zM178 633h2v2h-2zM185 623h2v2h-2zM182 617h2v2h-2zM221 633h2v2h-2zM178 624h2v2h-2zM199 621h2v2h-2zM180 630h2v2h-2zM172 627h2v2h-2zM183 616h2v2h-2zM179 629h2v2h-2zM185 619h2v2h-2zM176 629h2v2h-2zM218 625h2v2h-2zM218 625h2v2h-2zM197 618h2v2h-2zM194 616h2v2h-2zM210 628h2v2h-2zM194 615h2v2h-2zM180 628h2v2h-2zM194 616h2v2h-2zM206 621h2v2h-2zM193 624h2v2h-2zM213 625h2v2h-2zM183 618h2v2h-2zM195 620h2v2h-2zM200 619h2v2h-2zM195 618h2v2h-2zM210 624h2v2h-2zM211 621h2v2h-2zM186 624h2v2h-2zM167 624h2v2h-2zM205 630h2v2h-2zM221 628h2v2h-2zM170 617h2v2h-2zM630 635h2v2h-2zM630 635h2v2h-2zM645 646h2v2h-2zM676 649h2v2h-2zM628 635h2v2h-2zM641 638h2v2h-2zM645 639h2v2h-2zM644 644h2v2h-2zM647 646h2v2h-2zM671 648h2v2h-2zM636 639h2v2h-2zM673 646h2v2h-2zM649 639h2v2h-2zM663 642h2v2h-2zM657 646h2v2h-2zM641 644h2v2h-2zM669 650h2v2h-2zM677 656h2v2h-2zM662 648h2v2h-2zM650 639h2v2h-2zM668 649h2v2h-2zM628 632h2v2h-2zM648 642h2v2h-2zM631 644h2v2h-2zM624 630h2v2h-2zM678 650h2v2h-2zM636 639h2v2h-2zM646 642h2v2h-2zM678 647h2v2h-2zM671 645h2v2h-2zM631 636h2v2h-2zM648 644h2v2h-2zM664 646h2v2h-2zM633 636h2v2h-2zM671 647h2v2h-2zM671 643h2v2h-2zM659 644h2v2h-2zM678 649h2v2h-2zM634 636h2v2h-2zM633 639h2v2h-2zM624 635h2v2h-2zM657 641h2v2h-2zM678 647h2v2h-2zM625 637h2v2h-2zM650 637h2v2h-2zM679 652h2v2h-2zM678 649h2v2h-2zM671 644h2v2h-2zM636 637h2v2h-2zM662 644h2v2h-2zM636 635h2v2h-2zM644 644h2v2h-2zM660 641h2v2h-2zM649 644h2v2h-2zM631 637h2v2h-2zM641 639h2v2h-2zM624 639h2v2h-2zM663 641h2v2h-2zM661 647h2v2h-2zM629 637h2v2h-2zM666 646h2v2h-2zM645 645h2v2h-2zM660 645h2v2h-2zM664 641h2v2h-2zM629 636h2v2h-2zM630 635h2v2h-2zM631 634h2v2h-2zM659 648h2v2h-2zM675 647h2v2h-2zM650 640h2v2h-2zM660 641h2v2h-2zM632 648h2v2h-2zM649 642h2v2h-2zM653 641h2v2h-2zM643 639h2v2h-2zM653 645h2v2h-2zM670 645h2v2h-2zM657 646h2v2h-2zM652 641h2v2h-2zM673 644h2v2h-2zM653 645h2v2h-2zM680 651h2v2h-2zM638 637h2v2h-2zM663 648h2v2h-2zM647 640h2v2h-2zM625 641h2v2h-2zM665 647h2v2h-2zM642 642h2v2h-2zM662 647h2v2h-2zM636 639h2v2h-2zM624 636h2v2h-2zM643 642h2v2h-2zM655 645h2v2h-2zM622 636h2v2h-2zM631 631h2v2h-2zM629 637h2v2h-2zM630 638h2v2h-2zM628 637h2v2h-2zM658 643h2v2h-2zM654 648h2v2h-2zM637 635h2v2h-2zM636 638h2v2h-2zM660 642h2v2h-2zM669 649h2v2h-2zM655 642h2v2h-2zM636 638h2v2h-2zM638 632h2v2h-2zM680 652h2v2h-2zM679 650h2v2h-2zM634 636h2v2h-2zM662 647h2v2h-2zM670 645h2v2h-2zM646 645h2v2h-2zM666 645h2v2h-2zM654 641h2v2h-2zM656 647h2v2h-2zM624 637h2v2h-2zM622 637h2v2h-2zM644 640h2v2h-2zM670 646h2v2h-2zM659 644h2v2h-2zM677 653h2v2h-2zM663 642h2v2h-2zM634 633h2v2h-2zM661 643h2v2h-2zM630 635h2v2h-2zM676 650h2v2h-2zM656 651h2v2h-2zM668 653h2v2h-2zM644 637h2v2h-2zM669 644h2v2h-2zM664 646h2v2h-2zM626 633h2v2h-2zM656 643h2v2h-2zM638 641h2v2h-2zM644 641h2v2h-2zM680 658h2v2h-2zM643 634h2v2h-2zM677 653h2v2h-2zM658 642h2v2h-2zM622 631h2v2h-2zM658 645h2v2h-2z"/><path fill="#ffff00" d="M210 622h2v2h-2zM216 627h2v2h-2zM210 619h2v2h-2zM228 627h2v2h-2zM251 639h2v2h-2zM219 624h2v2h-2zM238 630h2v2h-2zM241 630h2v2h-2zM234 631h2v2h-2zM218 622h2v2h-2zM228 633h2v2h-2zM255 637h2v2h-2zM256 637h2v2h-2zM226 622h2v2h-2zM225 623h2v2h-2zM243 634h2v2h-2zM213 627h2v2h-2zM215 622h2v2h-2zM226 618h2v2h-2zM240 633h2v2h-2zM206 618h2v2h-2zM240 628h2v2h-2zM221 631h2v2h-2zM230 628h2v2h-2zM239 631h2v2h-2zM231 624h2v2h-2zM203 621h2v2h-2zM215 625h2v2h-2zM222 626h2v2h-2zM216 623h2v2h-2zM219 626h2v2h-2zM252 631h2v2h-2zM254 629h2v2h-2zM244 634h2v2h-2zM228 622h2v2h-2zM235 624h2v2h-2zM232 634h2v2h-2zM214 616h2v2h-2zM227 629h2v2h-2zM249 636h2v2h-2zM247 625h2v2h-2zM225 627h2v2h-2zM258 642h2v2h-2zM205 621h2v2h-2zM221 621h2v2h-2zM234 629h2v2h-2zM237 629h2v2h-2zM221 623h2v2h-2zM225 622h2v2h-2zM238 630h2v2h-2zM215 621h2v2h-2zM241 634h2v2h-2zM249 641h2v2h-2zM231 622h2v2h-2zM243 632h2v2h-2zM205 620h2v2h-2zM255 633h2v2h-2zM221 628h2v2h-2zM240 640h2v2h-2zM219 625h2v2h-2zM225 624h2v2h-2zM214 624h2v2h-2zM211 617h2v2h-2zM223 626h2v2h-2zM247 630h2v2h-2zM204 620h2v2h-2zM232 628h2v2h-2zM249 631h2v2h-2zM244 632h2v2h-2zM220 621h2v2h-2zM216 618h2v2h-2zM224 625h2v2h-2zM233 625h2v2h-2zM250 636h2v2h-2zM224 629h2v2h-2zM240 627h2v2h-2zM230 629h2v2h-2zM259 633h2v2h-2zM231 628h2v2h-2zM230 626h2v2h-2zM204 623h2v2h-2zM203 616h2v2h-2zM224 626h2v2h-2zM206 618h2v2h-2zM257 628h2v2h-2zM242 627h2v2h-2zM230 630h2v2h-2zM207 607h2v2h-2zM240 631h2v2h-2zM210 623h2v2h-2zM222 627h2v2h-2zM239 635h2v2h-2zM233 629h2v2h-2zM215 625h2v2h-2zM250 633h2v2h-2zM254 648h2v2h-2zM219 628h2v2h-2zM240 633h2v2h-2zM220 628h2v2h-2zM243 629h2v2h-2zM233 630h2v2h-2zM242 633h2v2h-2zM257 643h2v2h-2zM204 622h2v2h-2zM243 634h2v2h-2zM210 625h2v2h-2zM257 637h2v2h-2zM252 632h2v2h-2zM224 626h2v2h-2zM230 627h2v2h-2zM261 640h2v2h-2zM211 621h2v2h-2zM242 629h2v2h-2zM241 626h2v2h-2zM226 629h2v2h-2zM218 625h2v2h-2zM255 634h2v2h-2zM231 630h2v2h-2zM237 630h2v2h-2zM251 629h2v2h-2zM234 628h2v2h-2zM241 632h2v2h-2zM250 636h2v2h-2zM241 628h2v2h-2zM214 624h2v2h-2zM213 624h2v2h-2zM235 633h2v2h-2zM215 623h2v2h-2zM211 623h2v2h-2zM230 631h2v2h-2zM208 620h2v2h-2zM209 622h2v2h-2zM213 621h2v2h-2zM258 637h2v2h-2zM227 625h2v2h-2zM256 636h2v2h-2zM220 623h2v2h-2zM207 620h2v2h-2zM220 622h2v2h-2zM211 625h2v2h-2zM250 629h2v2h-2zM221 621h2v2h-2zM685 658h2v2h-2zM669 650h2v2h-2zM677 658h2v2h-2zM677 654h2v2h-2zM686 654h2v2h-2zM660 647h2v2h-2zM683 656h2v2h-2zM670 650h2v2h-2zM672 655h2v2h-2zM673 654h2v2h-2zM680 658h2v2h-2zM666 649h2v2h-2zM675 654h2v2h-2zM661 649h2v2h-2zM676 653h2v2h-2zM659 651h2v2h-2zM671 643h2v2h-2zM673 648h2v2h-2zM677 652h2v2h-2zM669 653h2v2h-2zM672 650h2v2h-2zM663 654h2v2h-2zM676 656h2v2h-2zM662 652h2v2h-2zM680 654h2v2h-2zM661 652h2v2h-2zM686 655h2v2h-2zM669 654h2v2h-2zM681 658h2v2h-2zM678 650h2v2h-2zM660 647h2v2h-2zM664 651h2v2h-2zM665 650h2v2h-2zM666 648h2v2h-2zM671 653h2v2h-2zM672 648h2v2h-2zM666 650h2v2h-2zM675 653h2v2h-2zM676 655h2v2h-2zM683 658h2v2h-2zM671 648h2v2h-2zM672 652h2v2h-2zM672 647h2v2h-2zM671 650h2v2h-2zM678 652h2v2h-2zM685 655h2v2h-2zM685 658h2v2h-2zM678 651h2v2h-2zM669 651h2v2h-2zM675 665h2v2h-2zM686 657h2v2h-2zM659 646h2v2h-2zM682 653h2v2h-2zM682 655h2v2h-2zM680 654h2v2h-2zM685 651h2v2h-2zM660 642h2v2h-2zM665 647h2v2h-2zM675 651h2v2h-2zM664 649h2v2h-2zM667 653h2v2h-2zM684 652h2v2h-2zM679 650h2v2h-2zM678 652h2v2h-2zM664 654h2v2h-2zM687 660h2v2h-2zM671 653h2v2h-2zM662 653h2v2h-2zM682 656h2v2h-2zM684 655h2v2h-2zM667 651h2v2h-2zM687 660h2v2h-2zM677 650h2v2h-2zM672 649h2v2h-2zM685 656h2v2h-2zM686 662h2v2h-2zM666 644h2v2h-2zM681 656h2v2h-2zM672 665h2v2h-2zM687 672h2v2h-2zM680 670h2v2h-2z"/><path fill="#00ffff" d="M253 634h2v2h-2zM243 634h2v2h-2zM295 626h2v2h-2zM280 626h2v2h-2zM280 630h2v2h-2zM252 634h2v2h-2zM272 639h2v2h-2zM245 639h2v2h-2zM274 627h2v2h-2zM298 623h2v2h-2zM297 622h2v2h-2zM300 623h2v2h-2zM252 636h2v2h-2zM266 633h2v2h-2zM299 621h2v2h-2zM269 628h2v2h-2zM250 640h2v2h-2zM244 633h2v2h-2zM297 625h2v2h-2zM270 633h2v2h-2zM256 626h2v2h-2zM283 627h2v2h-2zM279 628h2v2h-2zM300 621h2v2h-2zM266 629h2v2h-2zM248 632h2v2h-2zM283 628h2v2h-2zM249 631h2v2h-2zM274 628h2v2h-2zM256 633h2v2h-2zM284 621h2v2h-2zM267 630h2v2h-2zM263 630h2v2h-2zM263 633h2v2h-2zM258 633h2v2h-2zM295 624h2v2h-2zM287 627h2v2h-2zM285 628h2v2h-2zM251 628h2v2h-2zM275 631h2v2h-2zM249 630h2v2h-2zM289 622h2v2h-2zM264 632h2v2h-2zM261 634h2v2h-2zM298 627h2v2h-2zM292 621h2v2h-2zM293 623h2v2h-2zM251 644h2v2h-2zM255 637h2v2h-2zM256 649h2v2h-2zM280 628h2v2h-2zM251 635h2v2h-2zM256 631h2v2h-2zM267 634h2v2h-2zM247 631h2v2h-2zM278 632h2v2h-2zM261 617h2v2h-2zM252 635h2v2h-2zM270 632h2v2h-2zM241 636h2v2h-2zM283 629h2v2h-2zM294 621h2v2h-2zM261 636h2v2h-2zM247 640h2v2h-2zM299 613h2v2h-2zM264 628h2v2h-2zM297 622h2v2h-2zM271 634h2v2h-2zM271 634h2v2h-2zM266 632h2v2h-2zM282 626h2v2h-2zM248 633h2v2h-2zM246 638h2v2h-2zM276 626h2v2h-2zM277 626h2v2h-2zM258 634h2v2h-2zM271 626h2v2h-2zM297 620h2v2h-2zM254 616h2v2h-2zM256 645h2v2h-2zM267 629h2v2h-2zM289 620h2v2h-2zM287 638h2v2h-2zM287 625h2v2h-2zM288 624h2v2h-2zM273 630h2v2h-2zM243 637h2v2h-2zM297 627h2v2h-2zM244 636h2v2h-2zM247 631h2v2h-2zM260 630h2v2h-2zM266 627h2v2h-2zM288 636h2v2h-2zM279 631h2v2h-2zM269 632h2v2h-2zM254 632h2v2h-2zM272 627h2v2h-2zM247 640h2v2h-2zM258 629h2v2h-2zM291 626h2v2h-2zM254 634h2v2h-2zM272 620h2v2h-2zM250 636h2v2h-2zM284 628h2v2h-2zM264 634h2v2h-2zM283 636h2v2h-2zM257 637h2v2h-2zM286 627h2v2h-2zM251 635h2v2h-2zM274 625h2v2h-2zM250 637h2v2h-2zM270 630h2v2h-2zM264 630h2v2h-2zM272 633h2v2h-2zM280 626h2v2h-2zM263 633h2v2h-2zM246 638h2v2h-2zM269 627h2v2h-2zM262 632h2v2h-2zM246 631h2v2h-2zM298 626h2v2h-2zM299 614h2v2h-2zM295 625h2v2h-2zM242 637h2v2h-2zM250 643h2v2h-2zM252 633h2v2h-2zM288 623h2v2h-2zM264 629h2v2h-2zM264 631h2v2h-2zM299 622h2v2h-2zM293 621h2v2h-2zM246 651h2v2h-2zM294 624h2v2h-2zM256 631h2v2h-2zM268 628h2v2h-2zM243 632h2v2h-2zM287 620h2v2h-2zM269 634h2v2h-2zM277 624h2v2h-2zM298 628h2v2h-2zM249 638h2v2h-2zM270 627h2v2h-2z"/><path fill="#ff00ff" d="M337 618h2v2h-2zM308 612h2v2h-2zM323 621h2v2h-2zM324 620h2v2h-2zM312 618h2v2h-2zM335 616h2v2h-2zM279 637h2v2h-2zM282 623h2v2h-2zM322 617h2v2h-2zM330 614h2v2h-2zM328 618h2v2h-2zM298 625h2v2h-2zM281 635h2v2h-2zM284 627h2v2h-2zM295 620h2v2h-2zM281 629h2v2h-2zM283 632h2v2h-2zM303 621h2v2h-2zM325 622h2v2h-2zM297 625h2v2h-2zM301 624h2v2h-2zM302 623h2v2h-2zM301 622h2v2h-2zM326 620h2v2h-2zM297 625h2v2h-2zM337 627h2v2h-2zM293 621h2v2h-2zM338 613h2v2h-2zM285 626h2v2h-2zM295 621h2v2h-2zM309 625h2v2h-2zM331 620h2v2h-2zM285 629h2v2h-2zM295 617h2v2h-2zM337 612h2v2h-2zM332 611h2v2h-2zM284 622h2v2h-2zM315 621h2v2h-2zM302 615h2v2h-2zM306 620h2v2h-2zM308 618h2v2h-2zM293 617h2v2h-2zM321 614h2v2h-2zM291 629h2v2h-2zM301 621h2v2h-2zM282 635h2v2h-2zM300 624h2v2h-2zM309 618h2v2h-2zM329 619h2v2h-2zM330 617h2v2h-2zM322 621h2v2h-2zM312 615h2v2h-2zM316 623h2v2h-2zM284 627h2v2h-2zM309 619h2v2h-2zM335 619h2v2h-2zM307 615h2v2h-2zM292 627h2v2h-2zM309 618h2v2h-2zM293 620h2v2h-2zM334 620h2v2h-2zM332 621h2v2h-2zM295 625h2v2h-2zM336 610h2v2h-2zM303 621h2v2h-2zM324 622h2v2h-2zM325 614h2v2h-2zM303 630h2v2h-2zM316 615h2v2h-2zM284 629h2v2h-2zM285 625h2v2h-2zM332 618h2v2h-2zM332 613h2v2h-2zM328 619h2v2h-2zM334 612h2v2h-2zM291 624h2v2h-2zM281 639h2v2h-2zM335 613h2v2h-2zM321 612h2v2h-2zM294 631h2v2h-2zM333 622h2v2h-2zM290 610h2v2h-2zM298 621h2v2h-2zM287 635h2v2h-2zM297 624h2v2h-2zM334 615h2v2h-2zM307 622h2v2h-2zM327 614h2v2h-2zM328 616h2v2h-2zM321 619h2v2h-2zM301 622h2v2h-2zM309 618h2v2h-2zM294 623h2v2h-2zM284 623h2v2h-2zM325 618h2v2h-2zM318 618h2v2h-2zM284 629h2v2h-2zM335 623h2v2h-2zM317 619h2v2h-2zM326 620h2v2h-2zM291 624h2v2h-2zM329 620h2v2h-2zM315 611h2v2h-2zM316 618h2v2h-2zM333 616h2v2h-2zM316 620h2v2h-2zM301 623h2v2h-2zM324 614h2v2h-2zM313 617h2v2h-2zM289 622h2v2h-2zM305 620h2v2h-2zM314 628h2v2h-2zM303 619h2v2h-2zM327 614h2v2h-2zM333 619h2v2h-2zM284 635h2v2h-2zM285 622h2v2h-2zM307 616h2v2h-2zM337 616h2v2h-2zM326 618h2v2h-2zM285 633h2v2h-2zM320 618h2v2h-2zM284 615h2v2h-2zM282 625h2v2h-2zM333 623h2v2h-2zM304 636h2v2h-2zM318 617h2v2h-2zM291 631h2v2h-2zM286 625h2v2h-2zM322 615h2v2h-2zM321 624h2v2h-2zM311 615h2v2h-2zM314 625h2v2h-2zM283 635h2v2h-2zM284 622h2v2h-2zM310 619h2v2h-2zM310 620h2v2h-2zM298 618h2v2h-2zM334 616h2v2h-2zM288 626h2v2h-2zM303 613h2v2h-2zM314 614h2v2h-2z"/><path fill="#ffa000" d="M342 620h2v2h-2zM329 617h2v2h-2zM342 623h2v2h-2zM349 624h2v2h-2zM371 633h2v2h-2zM360 635h2v2h-2zM345 624h2v2h-2zM341 624h2v2h-2zM367 633h2v2h-2zM355 621h2v2h-2zM339 622h2v2h-2zM356 626h2v2h-2zM348 625h2v2h-2zM322 625h2v2h-2zM366 631h2v2h-2zM343 621h2v2h-2zM321 624h2v2h-2zM373 631h2v2h-2zM371 642h2v2h-2zM334 622h2v2h-2zM324 621h2v2h-2zM348 627h2v2h-2zM328 623h2v2h-2zM350 625h2v2h-2zM346 620h2v2h-2zM343 625h2v2h-2zM357 632h2v2h-2zM372 630h2v2h-2zM342 635h2v2h-2zM376 631h2v2h-2zM339 624h2v2h-2zM343 627h2v2h-2zM356 628h2v2h-2zM353 631h2v2h-2zM375 636h2v2h-2zM320 609h2v2h-2zM357 626h2v2h-2zM332 623h2v2h-2zM322 616h2v2h-2zM327 620h2v2h-2zM351 629h2v2h-2zM336 623h2v2h-2zM360 633h2v2h-2zM374 639h2v2h-2zM323 622h2v2h-2zM359 622h2v2h-2zM325 619h2v2h-2zM326 617h2v2h-2zM379 636h2v2h-2zM324 619h2v2h-2zM342 629h2v2h-2zM359 635h2v2h-2zM354 630h2v2h-2zM334 631h2v2h-2zM351 627h2v2h-2zM359 630h2v2h-2zM349 630h2v2h-2zM370 637h2v2h-2zM328 618h2v2h-2zM340 627h2v2h-2zM339 620h2v2h-2zM368 634h2v2h-2zM344 626h2v2h-2zM354 630h2v2h-2zM329 627h2v2h-2zM328 612h2v2h-2zM345 628h2v2h-2zM341 620h2v2h-2zM371 644h2v2h-2zM341 623h2v2h-2zM338 621h2v2h-2zM374 633h2v2h-2zM361 626h2v2h-2zM332 622h2v2h-2zM349 624h2v2h-2zM355 628h2v2h-2zM325 624h2v2h-2zM361 630h2v2h-2zM344 623h2v2h-2zM377 634h2v2h-2zM376 632h2v2h-2zM367 632h2v2h-2zM333 618h2v2h-2zM326 618h2v2h-2zM341 618h2v2h-2zM324 620h2v2h-2zM331 615h2v2h-2zM360 627h2v2h-2zM366 637h2v2h-2zM349 625h2v2h-2zM375 636h2v2h-2zM328 618h2v2h-2zM337 618h2v2h-2zM338 620h2v2h-2zM328 618h2v2h-2zM359 629h2v2h-2zM369 638h2v2h-2zM355 624h2v2h-2zM355 632h2v2h-2zM361 629h2v2h-2zM337 625h2v2h-2zM374 643h2v2h-2zM346 624h2v2h-2zM359 635h2v2h-2zM322 621h2v2h-2zM375 638h2v2h-2zM374 635h2v2h-2zM347 624h2v2h-2zM346 619h2v2h-2zM352 631h2v2h-2zM362 641h2v2h-2zM329 625h2v2h-2zM328 623h2v2h-2zM347 628h2v2h-2zM352 630h2v2h-2zM367 636h2v2h-2zM337 623h2v2h-2zM337 629h2v2h-2zM341 627h2v2h-2zM371 637h2v2h-2zM370 632h2v2h-2zM376 636h2v2h-2zM375 633h2v2h-2zM358 631h2v2h-2zM366 629h2v2h-2zM373 642h2v2h-2zM348 630h2v2h-2zM351 630h2v2h-2zM344 619h2v2h-2zM322 617h2v2h-2zM340 642h2v2h-2zM359 637h2v2h-2zM372 645h2v2h-2zM342 626h2v2h-2zM326 618h2v2h-2zM372 639h2v2h-2zM367 632h2v2h-2zM353 631h2v2h-2zM355 631h2v2h-2zM345 627h2v2h-2zM372 635h2v2h-2zM344 621h2v2h-2z"/><path fill="#1e90ff" d="M393 635h2v2h-2zM391 634h2v2h-2zM373 634h2v2h-2zM401 638h2v2h-2zM398 630h2v2h-2zM413 634h2v2h-2zM391 651h2v2h-2zM401 631h2v2h-2zM382 629h2v2h-2zM359 627h2v2h-2zM359 627h2v2h-2zM377 637h2v2h-2zM375 636h2v2h-2zM358 632h2v2h-2zM372 630h2v2h-2zM381 627h2v2h-2zM385 637h2v2h-2zM408 628h2v2h-2zM396 632h2v2h-2zM379 634h2v2h-2zM362 625h2v2h-2zM393 631h2v2h-2zM371 635h2v2h-2zM399 631h2v2h-2zM400 636h2v2h-2zM359 634h2v2h-2zM409 635h2v2h-2zM389 638h2v2h-2zM361 625h2v2h-2zM405 636h2v2h-2zM395 629h2v2h-2zM389 629h2v2h-2zM380 631h2v2h-2zM410 636h2v2h-2zM359 623h2v2h-2zM394 634h2v2h-2zM411 639h2v2h-2zM369 622h2v2h-2zM410 637h2v2h-2zM393 628h2v2h-2zM405 634h2v2h-2zM403 635h2v2h-2zM391 635h2v2h-2zM375 624h2v2h-2zM405 632h2v2h-2zM390 630h2v2h-2zM370 631h2v2h-2zM387 632h2v2h-2zM392 636h2v2h-2zM372 629h2v2h-2zM410 640h2v2h-2zM376 636h2v2h-2zM403 635h2v2h-2zM358 628h2v2h-2zM386 631h2v2h-2zM369 633h2v2h-2zM389 634h2v2h-2zM383 630h2v2h-2zM374 627h2v2h-2zM370 630h2v2h-2zM396 630h2v2h-2zM399 634h2v2h-2zM386 630h2v2h-2zM373 634h2v2h-2zM379 635h2v2h-2zM406 639h2v2h-2zM397 638h2v2h-2zM378 632h2v2h-2zM410 640h2v2h-2zM368 629h2v2h-2zM386 636h2v2h-2zM389 626h2v2h-2zM393 636h2v2h-2zM403 629h2v2h-2zM411 637h2v2h-2zM382 637h2v2h-2zM397 635h2v2h-2zM360 629h2v2h-2zM371 630h2v2h-2zM387 625h2v2h-2zM397 631h2v2h-2zM409 628h2v2h-2zM392 636h2v2h-2zM404 635h2v2h-2zM405 638h2v2h-2zM360 632h2v2h-2zM381 636h2v2h-2zM393 631h2v2h-2zM386 637h2v2h-2zM396 631h2v2h-2zM361 627h2v2h-2zM377 625h2v2h-2zM394 637h2v2h-2zM367 627h2v2h-2zM382 634h2v2h-2zM371 622h2v2h-2zM364 631h2v2h-2zM395 629h2v2h-2zM387 633h2v2h-2zM411 637h2v2h-2zM413 633h2v2h-2zM383 638h2v2h-2zM381 636h2v2h-2zM388 632h2v2h-2zM384 637h2v2h-2zM387 634h2v2h-2zM371 631h2v2h-2zM411 644h2v2h-2zM362 625h2v2h-2zM376 636h2v2h-2zM392 631h2v2h-2zM392 637h2v2h-2zM368 626h2v2h-2zM367 629h2v2h-2zM381 634h2v2h-2zM373 629h2v2h-2zM387 636h2v2h-2zM402 634h2v2h-2zM406 637h2v2h-2zM380 631h2v2h-2zM380 624h2v2h-2zM392 634h2v2h-2zM401 638h2v2h-2zM409 636h2v2h-2zM372 631h2v2h-2zM409 632h2v2h-2zM371 628h2v2h-2zM404 638h2v2h-2zM386 631h2v2h-2zM386 633h2v2h-2zM361 629h2v2h-2zM398 627h2v2h-2zM365 639h2v2h-2zM410 638h2v2h-2zM363 635h2v2h-2zM411 625h2v2h-2zM366 634h2v2h-2zM411 636h2v2h-2zM384 624h2v2h-2zM367 633h2v2h-2zM394 634h2v2h-2zM378 636h2v2h-2z"/><path fill="#ff1493" d="M424 637h2v2h-2zM435 639h2v2h-2zM429 642h2v2h-2zM405 631h2v2h-2zM407 632h2v2h-2zM399 633h2v2h-2zM417 625h2v2h-2zM404 629h2v2h-2zM397 627h2v2h-2zM400 624h2v2h-2zM423 631h2v2h-2zM403 631h2v2h-2zM417 638h2v2h-2zM436 641h2v2h-2zM398 627h2v2h-2zM400 626h2v2h-2zM404 634h2v2h-2zM423 633h2v2h-2zM427 642h2v2h-2zM416 635h2v2h-2zM400 628h2v2h-2zM403 628h2v2h-2zM398 624h2v2h-2zM398 628h2v2h-2zM431 638h2v2h-2zM415 638h2v2h-2zM428 635h2v2h-2zM429 647h2v2h-2zM422 635h2v2h-2zM428 640h2v2h-2zM436 638h2v2h-2zM403 634h2v2h-2zM419 633h2v2h-2zM402 628h2v2h-2zM409 628h2v2h-2zM423 633h2v2h-2zM411 633h2v2h-2zM417 626h2v2h-2zM429 636h2v2h-2zM398 632h2v2h-2zM404 636h2v2h-2zM415 633h2v2h-2zM425 641h2v2h-2zM411 632h2v2h-2zM431 641h2v2h-2zM403 621h2v2h-2zM401 631h2v2h-2zM407 633h2v2h-2zM427 640h2v2h-2zM406 630h2v2h-2zM425 646h2v2h-2zM435 636h2v2h-2zM418 631h2v2h-2zM424 634h2v2h-2zM401 625h2v2h-2zM429 636h2v2h-2zM420 630h2v2h-2zM437 637h2v2h-2zM402 632h2v2h-2zM416 637h2v2h-2zM416 635h2v2h-2zM412 635h2v2h-2zM432 642h2v2h-2zM432 646h2v2h-2zM417 637h2v2h-2zM410 623h2v2h-2zM408 634h2v2h-2zM419 632h2v2h-2zM401 630h2v2h-2zM399 628h2v2h-2zM410 627h2v2h-2zM399 629h2v2h-2zM398 630h2v2h-2zM430 641h2v2h-2zM418 641h2v2h-2zM408 631h2v2h-2zM435 630h2v2h-2zM416 632h2v2h-2zM415 631h2v2h-2zM435 643h2v2h-2zM438 640h2v2h-2zM393 623h2v2h-2zM418 633h2v2h-2zM425 639h2v2h-2zM437 652h2v2h-2zM413 642h2v2h-2zM426 638h2v2h-2zM407 628h2v2h-2zM422 638h2v2h-2zM424 627h2v2h-2zM399 637h2v2h-2zM423 632h2v2h-2zM409 634h2v2h-2zM434 631h2v2h-2zM434 633h2v2h-2zM400 631h2v2h-2zM417 635h2v2h-2zM423 643h2v2h-2zM398 628h2v2h-2zM405 632h2v2h-2zM402 632h2v2h-2zM425 635h2v2h-2zM415 637h2v2h-2zM410 630h2v2h-2zM398 632h2v2h-2zM411 645h2v2h-2zM408 631h2v2h-2zM413 628h2v2h-2zM426 637h2v2h-2zM413 640h2v2h-2zM401 626h2v2h-2zM438 641h2v2h-2zM409 627h2v2h-2zM411 625h2v2h-2zM435 641h2v2h-2zM427 640h2v2h-2zM408 633h2v2h-2zM436 647h2v2h-2zM402 630h2v2h-2zM430 639h2v2h-2zM438 642h2v2h-2zM440 642h2v2h-2zM415 633h2v2h-2zM401 624h2v2h-2zM402 628h2v2h-2zM415 641h2v2h-2zM426 636h2v2h-2z"/><path fill="#00f0b8" d="M473 630h2v2h-2zM444 631h2v2h-2zM436 648h2v2h-2zM433 651h2v2h-2zM491 620h2v2h-2zM466 630h2v2h-2zM490 621h2v2h-2zM463 648h2v2h-2zM455 624h2v2h-2zM470 629h2v2h-2zM448 645h2v2h-2zM469 640h2v2h-2zM461 643h2v2h-2zM451 638h2v2h-2zM452 637h2v2h-2zM458 635h2v2h-2zM438 651h2v2h-2zM440 646h2v2h-2zM476 624h2v2h-2zM469 634h2v2h-2zM460 638h2v2h-2zM457 635h2v2h-2zM445 644h2v2h-2zM492 620h2v2h-2zM461 639h2v2h-2zM449 636h2v2h-2zM436 640h2v2h-2zM468 638h2v2h-2zM470 631h2v2h-2zM444 651h2v2h-2zM465 641h2v2h-2zM463 638h2v2h-2zM480 626h2v2h-2zM452 654h2v2h-2zM459 640h2v2h-2zM464 630h2v2h-2zM460 638h2v2h-2zM463 631h2v2h-2zM442 644h2v2h-2zM491 620h2v2h-2zM455 635h2v2h-2zM437 652h2v2h-2zM458 642h2v2h-2zM481 624h2v2h-2zM441 647h2v2h-2zM443 643h2v2h-2zM448 644h2v2h-2zM457 640h2v2h-2zM457 636h2v2h-2zM434 643h2v2h-2zM472 605h2v2h-2zM482 624h2v2h-2zM481 623h2v2h-2zM452 630h2v2h-2zM484 624h2v2h-2zM456 639h2v2h-2zM491 627h2v2h-2zM455 641h2v2h-2zM457 651h2v2h-2zM461 630h2v2h-2zM464 634h2v2h-2zM480 629h2v2h-2zM461 637h2v2h-2zM467 631h2v2h-2zM453 640h2v2h-2zM469 631h2v2h-2zM475 625h2v2h-2zM486 624h2v2h-2zM448 632h2v2h-2zM447 655h2v2h-2zM450 647h2v2h-2zM469 633h2v2h-2zM461 634h2v2h-2zM446 638h2v2h-2zM489 614h2v2h-2zM477 637h2v2h-2zM493 626h2v2h-2zM466 634h2v2h-2zM473 631h2v2h-2zM485 621h2v2h-2zM464 641h2v2h-2zM457 638h2v2h-2zM445 649h2v2h-2zM443 650h2v2h-2zM446 638h2v2h-2zM469 637h2v2h-2zM470 627h2v2h-2zM445 640h2v2h-2zM439 642h2v2h-2zM459 628h2v2h-2zM482 627h2v2h-2zM447 640h2v2h-2zM473 613h2v2h-2zM478 637h2v2h-2zM472 618h2v2h-2zM448 655h2v2h-2zM450 639h2v2h-2zM451 625h2v2h-2zM437 643h2v2h-2zM488 625h2v2h-2zM477 626h2v2h-2zM472 629h2v2h-2zM483 628h2v2h-2zM435 654h2v2h-2zM473 632h2v2h-2zM439 646h2v2h-2zM468 633h2v2h-2zM447 640h2v2h-2zM484 631h2v2h-2zM441 634h2v2h-2zM454 643h2v2h-2zM472 633h2v2h-2zM470 631h2v2h-2zM486 627h2v2h-2zM486 623h2v2h-2zM467 633h2v2h-2zM446 641h2v2h-2zM492 627h2v2h-2zM456 636h2v2h-2zM444 643h2v2h-2zM437 646h2v2h-2zM490 623h2v2h-2zM439 645h2v2h-2zM484 628h2v2h-2zM476 627h2v2h-2zM478 631h2v2h-2zM481 637h2v2h-2z"/><path fill="#e0f000" d="M521 616h2v2h-2zM501 627h2v2h-2zM483 631h2v2h-2zM528 632h2v2h-2zM473 630h2v2h-2zM475 621h2v2h-2zM530 620h2v2h-2zM527 614h2v2h-2zM477 627h2v2h-2zM525 627h2v2h-2zM486 626h2v2h-2zM478 627h2v2h-2zM526 622h2v2h-2zM487 627h2v2h-2zM521 622h2v2h-2zM526 621h2v2h-2zM507 621h2v2h-2zM502 621h2v2h-2zM525 618h2v2h-2zM478 624h2v2h-2zM530 623h2v2h-2zM504 625h2v2h-2zM516 624h2v2h-2zM520 627h2v2h-2zM522 624h2v2h-2zM508 626h2v2h-2zM518 616h2v2h-2zM491 623h2v2h-2zM510 619h2v2h-2zM481 636h2v2h-2zM511 626h2v2h-2zM484 627h2v2h-2zM504 626h2v2h-2zM494 611h2v2h-2zM510 623h2v2h-2zM478 640h2v2h-2zM530 620h2v2h-2zM524 612h2v2h-2zM524 614h2v2h-2zM472 629h2v2h-2zM511 622h2v2h-2zM526 622h2v2h-2zM529 620h2v2h-2zM517 621h2v2h-2zM518 614h2v2h-2zM475 627h2v2h-2zM495 619h2v2h-2zM525 621h2v2h-2zM525 613h2v2h-2zM502 624h2v2h-2zM494 620h2v2h-2zM498 627h2v2h-2zM513 615h2v2h-2zM504 620h2v2h-2zM521 619h2v2h-2zM507 622h2v2h-2zM483 625h2v2h-2zM514 617h2v2h-2zM475 631h2v2h-2zM488 623h2v2h-2zM480 622h2v2h-2zM488 638h2v2h-2zM524 619h2v2h-2zM530 621h2v2h-2zM515 631h2v2h-2zM503 622h2v2h-2zM502 623h2v2h-2zM501 605h2v2h-2zM490 627h2v2h-2zM520 622h2v2h-2zM484 627h2v2h-2zM491 627h2v2h-2zM480 631h2v2h-2zM529 619h2v2h-2zM524 618h2v2h-2zM523 618h2v2h-2zM475 632h2v2h-2zM502 628h2v2h-2zM504 621h2v2h-2zM522 621h2v2h-2zM473 628h2v2h-2zM523 613h2v2h-2zM508 614h2v2h-2zM509 623h2v2h-2zM521 618h2v2h-2zM505 625h2v2h-2zM512 618h2v2h-2zM504 618h2v2h-2zM475 629h2v2h-2zM528 617h2v2h-2zM487 629h2v2h-2zM520 610h2v2h-2zM528 619h2v2h-2zM501 620h2v2h-2zM504 623h2v2h-2zM508 619h2v2h-2zM475 624h2v2h-2zM482 624h2v2h-2zM520 622h2v2h-2zM483 626h2v2h-2zM491 628h2v2h-2zM507 617h2v2h-2zM476 622h2v2h-2zM509 622h2v2h-2zM495 628h2v2h-2zM506 625h2v2h-2zM485 625h2v2h-2zM490 631h2v2h-2zM504 626h2v2h-2zM528 618h2v2h-2zM518 622h2v2h-2zM491 630h2v2h-2zM520 618h2v2h-2zM525 624h2v2h-2zM510 621h2v2h-2zM480 631h2v2h-2zM498 634h2v2h-2zM482 625h2v2h-2zM508 625h2v2h-2zM520 625h2v2h-2zM496 626h2v2h-2zM508 620h2v2h-2zM495 626h2v2h-2zM502 627h2v2h-2zM529 616h2v2h-2zM487 624h2v2h-2zM483 624h2v2h-2zM490 627h2v2h-2zM476 628h2v2h-2zM519 616h2v2h-2zM520 617h2v2h-2zM477 632h2v2h-2zM529 616h2v2h-2zM494 625h2v2h-2zM497 623h2v2h-2zM482 631h2v2h-2zM495 622h2v2h-2zM494 628h2v2h-2zM516 621h2v2h-2zM503 623h2v2h-2zM496 623h2v2h-2zM492 631h2v2h-2z"/><path fill="#a020f0" d="M534 616h2v2h-2zM510 632h2v2h-2zM547 610h2v2h-2zM533 621h2v2h-2zM555 609h2v2h-2zM558 613h2v2h-2zM557 608h2v2h-2zM539 613h2v2h-2zM550 606h2v2h-2zM553 607h2v2h-2zM516 630h2v2h-2zM527 619h2v2h-2zM552 607h2v2h-2zM546 601h2v2h-2zM520 628h2v2h-2zM564 613h2v2h-2zM518 627h2v2h-2zM566 616h2v2h-2zM530 618h2v2h-2zM513 634h2v2h-2zM514 633h2v2h-2zM518 630h2v2h-2zM524 627h2v2h-2zM558 612h2v2h-2zM545 612h2v2h-2zM525 625h2v2h-2zM536 623h2v2h-2zM548 611h2v2h-2zM544 609h2v2h-2zM521 629h2v2h-2zM533 616h2v2h-2zM550 606h2v2h-2zM516 632h2v2h-2zM548 608h2v2h-2zM563 614h2v2h-2zM559 611h2v2h-2zM565 622h2v2h-2zM512 634h2v2h-2zM562 612h2v2h-2zM539 615h2v2h-2zM566 621h2v2h-2zM550 606h2v2h-2zM515 632h2v2h-2zM514 640h2v2h-2zM511 636h2v2h-2zM549 612h2v2h-2zM542 611h2v2h-2zM531 616h2v2h-2zM552 606h2v2h-2zM554 609h2v2h-2zM531 615h2v2h-2zM550 614h2v2h-2zM563 617h2v2h-2zM515 644h2v2h-2zM528 622h2v2h-2zM511 631h2v2h-2zM565 611h2v2h-2zM516 636h2v2h-2zM547 611h2v2h-2zM535 619h2v2h-2zM535 620h2v2h-2zM544 617h2v2h-2zM553 609h2v2h-2zM540 609h2v2h-2zM543 615h2v2h-2zM550 605h2v2h-2zM560 613h2v2h-2zM535 627h2v2h-2zM539 621h2v2h-2zM533 618h2v2h-2zM524 622h2v2h-2zM554 604h2v2h-2zM541 612h2v2h-2zM520 633h2v2h-2zM510 637h2v2h-2zM534 617h2v2h-2zM540 613h2v2h-2zM531 621h2v2h-2zM550 607h2v2h-2zM550 609h2v2h-2zM543 612h2v2h-2zM525 629h2v2h-2zM543 617h2v2h-2zM538 622h2v2h-2zM561 614h2v2h-2zM555 605h2v2h-2zM537 628h2v2h-2zM555 608h2v2h-2zM537 616h2v2h-2zM557 609h2v2h-2zM521 629h2v2h-2zM528 620h2v2h-2zM531 621h2v2h-2zM561 611h2v2h-2zM539 614h2v2h-2zM513 632h2v2h-2zM568 618h2v2h-2zM544 611h2v2h-2zM559 612h2v2h-2zM556 609h2v2h-2zM521 631h2v2h-2zM542 617h2v2h-2zM565 618h2v2h-2zM520 630h2v2h-2zM525 629h2v2h-2zM517 629h2v2h-2zM551 604h2v2h-2zM559 619h2v2h-2zM565 614h2v2h-2zM556 605h2v2h-2zM539 614h2v2h-2zM545 611h2v2h-2zM561 612h2v2h-2zM552 605h2v2h-2zM518 631h2v2h-2zM562 614h2v2h-2zM566 618h2v2h-2zM559 614h2v2h-2zM567 622h2v2h-2zM561 611h2v2h-2zM558 616h2v2h-2zM542 616h2v2h-2zM555 603h2v2h-2zM514 634h2v2h-2zM514 634h2v2h-2zM553 613h2v2h-2zM522 627h2v2h-2z"/><path fill="#fff" d="M120 746h5v1h-5zM689 746h-5v1h5zM120 741h5v1h-5zM689 741h-5v1h5zM120 735h5v1h-5zM689 735h-5v1h5zM120 730h5v1h-5zM689 730h-5v1h5zM120 724h11v1h-11zM689 724h-11v1h11zM120 719h5v1h-5zM689 719h-5v1h5zM120 713h5v1h-5zM689 713h-5v1h5zM120 708h5v1h-5zM689 708h-5v1h5zM120 702h5v1h-5zM689 702h-5v1h5zM120 697h5v1h-5zM689 697h-5v1h5zM120 691h5v1h-5zM689 691h-5v1h5zM120 686h5v1h-5zM689 686h-5v1h5zM120 680h5v1h-5zM689 680h-5v1h5zM120 675h5v1h-5zM689 675h-5v1h5zM120 669h11v1h-11zM689 669h-11v1h11zM120 664h5v1h-5zM689 664h-5v1h5zM120 658h5v1h-5zM689 658h-5v1h5zM120 653h5v1h-5zM689 653h-5v1h5zM120 647h5v1h-5zM689 647h-5v1h5zM120 642h5v1h-5zM689 642h-5v1h5zM120 636h5v1h-5zM689 636h-5v1h5zM120 631h5v1h-5zM689 631h-5v1h5zM120 625h5v1h-5zM689 625h-5v1h5zM120 620h5v1h-5zM689 620h-5v1h5zM120 614h11v1h-11zM689 614h-11v1h11zM120 609h5v1h-5zM689 609h-5v1h5zM120 603h5v1h-5zM689 603h-5v1h5zM120 598h5v1h-5zM689 598h-5v1h5zM120 592h5v1h-5zM689 592h-5v1h5zM120 587h5v1h-5zM689 587h-5v1h5zM120 581h5v1h-5zM689 581h-5v1h5zM120 576h5v1h-5zM689 576h-5v1h5zM120 570h5v1h-5zM689 570h-5v1h5zM120 565h5v1h-5zM689 565h-5v1h5zM120 559h11v1h-11zM689 559h-11v1h11zM120 554h5v1h-5zM689 554h-5v1h5zM120 548h5v1h-5zM689 548h-5v1h5zM120 543h5v1h-5zM689 543h-5v1h5zM120 537h5v1h-5zM689 537h-5v1h5zM120 532h5v1h-5zM689 532h-5v1h5zM120 526h5v1h-5zM689 526h-5v1h5zM130 747v-4h1v4zM130 526v4h1v-4zM158 747v-2h1v2zM158 526v2h1v-2zM186 747v-2h1v2zM186 526v2h1v-2zM213 747v-2h1v2zM213 526v2h1v-2zM241 747v-2h1v2zM241 526v2h1v-2zM269 747v-4h1v4zM269 526v4h1v-4zM297 747v-2h1v2zM297 526v2h1v-2zM325 747v-2h1v2zM325 526v2h1v-2zM353 747v-2h1v2zM353 526v2h1v-2zM381 747v-2h1v2zM381 526v2h1v-2zM408 747v-4h1v4zM408 526v4h1v-4zM436 747v-2h1v2zM436 526v2h1v-2zM464 747v-2h1v2zM464 526v2h1v-2zM492 747v-2h1v2zM492 526v2h1v-2zM520 747v-2h1v2zM520 526v2h1v-2zM548 747v-4h1v4zM548 526v4h1v-4zM576 747v-2h1v2zM576 526v2h1v-2zM603 747v-2h1v2zM603 526v2h1v-2zM631 747v-2h1v2zM631 526v2h1v-2zM659 747v-2h1v2zM659 526v2h1v-2zM687 747v-4h1v4zM687 526v4h1v-4z"/><path fill="none" stroke="#fff" stroke-width="1" d="M119.5 525.5H689.5V747.5H119.5Z"/><text font-family="Liberation Sans" fill="#fff" stroke="#000" stroke-width="0.3" font-size="19" x="112" y="517" word-spacing="7" textLength="582" lengthAdjust="spacingAndGlyphs">Adjusted 'AAR' TDT 55601812 200500 JUPITER AOT L03</text><text font-family="Liberation Sans" fill="#fff" stroke="#000" stroke-width="0.3" font-size="17" x="104" y="731" textLength="8" lengthAdjust="spacingAndGlyphs">8</text><text font-family="Liberation Sans" fill="#fff" stroke="#000" stroke-width="0.3" font-size="17" x="104" y="676" textLength="8" lengthAdjust="spacingAndGlyphs">9</text><text font-family="Liberation Sans" fill="#fff" stroke="#000" stroke-width="0.3" font-size="17" x="95" y="621" textLength="17" lengthAdjust="spacingAndGlyphs">10</text><text font-family="Liberation Sans" fill="#fff" stroke="#000" stroke-width="0.3" font-size="17" x="95" y="566" textLength="17" lengthAdjust="spacingAndGlyphs">11</text><text font-family="Liberation Sans" fill="#fff" stroke="#000" stroke-width="0.3" font-size="17" x="108" y="771" textLength="44" lengthAdjust="spacingAndGlyphs">120.0</text><text font-family="Liberation Sans" fill="#fff" stroke="#000" stroke-width="0.3" font-size="17" x="247" y="771" textLength="44" lengthAdjust="spacingAndGlyphs">120.5</text><text font-family="Liberation Sans" fill="#fff" stroke="#000" stroke-width="0.3" font-size="17" x="386" y="771" textLength="44" lengthAdjust="spacingAndGlyphs">121.0</text><text font-family="Liberation Sans" fill="#fff" stroke="#000" stroke-width="0.3" font-size="17" x="526" y="771" textLength="44" lengthAdjust="spacingAndGlyphs">121.5</text><text font-family="Liberation Sans" fill="#fff" stroke="#000" stroke-width="0.3" font-size="17" x="665" y="771" textLength="44" lengthAdjust="spacingAndGlyphs">122.0</text><text font-family="Liberation Sans" fill="#fff" stroke="#000" stroke-width="0.3" font-size="16" x="330" y="789" textLength="89" lengthAdjust="spacingAndGlyphs">Wavelength</text><rect fill="#fff" x="429" y="784" width="8" height="1"/><text font-family="Liberation Sans" fill="#fff" stroke="#000" stroke-width="0.3" font-size="16" x="450" y="789" textLength="27" lengthAdjust="spacingAndGlyphs">&#956;m</text><path stroke="#fff" stroke-width="1" d="M63.5 713.5L82.5 723.5"/><g transform="rotate(-90)"><text font-family="Liberation Sans" fill="#fff" stroke="#000" stroke-width="0.3" font-size="16" x="-763" y="78" textLength="30" lengthAdjust="spacingAndGlyphs">Flux</text><text font-family="Liberation Sans" fill="#fff" stroke="#000" stroke-width="0.3" font-size="16" x="-700.5" y="78" textLength="19.5" lengthAdjust="spacingAndGlyphs">10</text><text font-family="Liberation Sans" fill="#fff" stroke="#000" stroke-width="0.3" font-size="12" x="-677" y="70" textLength="16" lengthAdjust="spacingAndGlyphs">&#8722;15</text><text font-family="Liberation Sans" fill="#fff" stroke="#000" stroke-width="0.3" font-size="16" x="-653.5" y="78" textLength="43.5" lengthAdjust="spacingAndGlyphs">Watts</text><text font-family="Liberation Sans" fill="#fff" stroke="#000" stroke-width="0.3" font-size="16" x="-600" y="78" textLength="23.5" lengthAdjust="spacingAndGlyphs">cm</text><text font-family="Liberation Sans" fill="#fff" stroke="#000" stroke-width="0.3" font-size="12" x="-574.5" y="70" textLength="14.5" lengthAdjust="spacingAndGlyphs">&#8722;2</text><text font-family="Liberation Sans" fill="#fff" stroke="#000" stroke-width="0.3" font-size="16" x="-552" y="78" textLength="25.5" lengthAdjust="spacingAndGlyphs">&#956;m</text><text font-family="Liberation Sans" fill="#fff" stroke="#000" stroke-width="0.3" font-size="12" x="-524.5" y="70" textLength="13.5" lengthAdjust="spacingAndGlyphs">&#8722;1</text></g></svg>
<div class="abs etch" style="left:722px;top:496px;width:174px;height:355px;"></div>
<div class="abs etch" style="left:727px;top:501px;width:164px;height:21px;"></div>
<div class="abs mono" style="left:761px;top:504px;">X:&nbsp;&nbsp;&nbsp;&nbsp;&nbsp;&nbsp;&nbsp;121.495</div>
<div class="abs etch" style="left:727px;top:525px;width:164px;height:21px;"></div>
<div class="abs mono" style="left:761px;top:528px;">Y:&nbsp;&nbsp;&nbsp;&nbsp;&nbsp;&nbsp;&nbsp;7.28758</div>
<div class="abs etch" style="left:727px;top:549px;width:164px;height:213px;"></div>
<div class="abs chk" style="left:740px;top:562px;width:10px;height:10px;"></div>
<div class="abs mono" style="left:755px;top:560px;">Freeze&nbsp;Ranges</div>
<div class="abs mono" style="left:736px;top:597px;">Xmin</div>
<div class="abs etch" style="left:766px;top:587px;width:76px;height:34px;"></div>
<div class="abs fld" style="left:770px;top:591px;width:68px;height:26px;"></div>
<div class="abs mono" style="left:776px;top:597px;">119.960</div>
<svg class="abs" style="left:775px;top:598px" width="3" height="13" viewBox="0 0 3 13"><path fill="#000" d="M0 0h1v1h-1zM2 0h1v1h-1zM1 1h1v1h-1zM1 11h1v1h-1zM0 12h1v1h-1zM2 12h1v1h-1zM2 2h1v1h-1zM2 3h1v1h-1zM2 4h1v1h-1zM2 5h1v1h-1zM2 6h1v1h-1zM2 7h1v1h-1zM2 8h1v1h-1zM2 9h1v1h-1zM2 10h1v1h-1zM1 2h1v1h-1zM1 4h1v1h-1zM1 6h1v1h-1zM1 8h1v1h-1zM1 10h1v1h-1z"/></svg>
<div class="abs mono" style="left:736px;top:641px;">Xmax</div>
<div class="abs etch" style="left:766px;top:631px;width:76px;height:34px;"></div>
<div class="abs fld" style="left:770px;top:635px;width:68px;height:26px;"></div>
<div class="abs mono" style="left:776px;top:641px;">122.004</div>
<svg class="abs" style="left:775px;top:642px" width="3" height="13" viewBox="0 0 3 13"><path fill="#000" d="M0 0h1v1h-1zM2 0h1v1h-1zM1 1h1v1h-1zM1 11h1v1h-1zM0 12h1v1h-1zM2 12h1v1h-1zM2 2h1v1h-1zM2 3h1v1h-1zM2 4h1v1h-1zM2 5h1v1h-1zM2 6h1v1h-1zM2 7h1v1h-1zM2 8h1v1h-1zM2 9h1v1h-1zM2 10h1v1h-1zM1 2h1v1h-1zM1 4h1v1h-1zM1 6h1v1h-1zM1 8h1v1h-1zM1 10h1v1h-1z"/></svg>
<div class="abs mono" style="left:736px;top:685px;">Ymin</div>
<div class="abs etch" style="left:766px;top:675px;width:76px;height:34px;"></div>
<div class="abs fld" style="left:770px;top:679px;width:68px;height:26px;"></div>
<div class="abs mono" style="left:776px;top:685px;">7.57839</div>
<svg class="abs" style="left:775px;top:686px" width="3" height="13" viewBox="0 0 3 13"><path fill="#000" d="M0 0h1v1h-1zM2 0h1v1h-1zM1 1h1v1h-1zM1 11h1v1h-1zM0 12h1v1h-1zM2 12h1v1h-1zM2 2h1v1h-1zM2 3h1v1h-1zM2 4h1v1h-1zM2 5h1v1h-1zM2 6h1v1h-1zM2 7h1v1h-1zM2 8h1v1h-1zM2 9h1v1h-1zM2 10h1v1h-1zM1 2h1v1h-1zM1 4h1v1h-1zM1 6h1v1h-1zM1 8h1v1h-1zM1 10h1v1h-1z"/></svg>
<div class="abs mono" style="left:736px;top:729px;">Ymax</div>
<div class="abs etch" style="left:766px;top:719px;width:76px;height:34px;"></div>
<div class="abs fld" style="left:770px;top:723px;width:68px;height:26px;"></div>
<div class="abs mono" style="left:776px;top:729px;">11.6130</div>
<svg class="abs" style="left:775px;top:730px" width="3" height="13" viewBox="0 0 3 13"><path fill="#000" d="M0 0h1v1h-1zM2 0h1v1h-1zM1 1h1v1h-1zM1 11h1v1h-1zM0 12h1v1h-1zM2 12h1v1h-1zM2 2h1v1h-1zM2 3h1v1h-1zM2 4h1v1h-1zM2 5h1v1h-1zM2 6h1v1h-1zM2 7h1v1h-1zM2 8h1v1h-1zM2 9h1v1h-1zM2 10h1v1h-1zM1 2h1v1h-1zM1 4h1v1h-1zM1 6h1v1h-1zM1 8h1v1h-1zM1 10h1v1h-1z"/></svg>
<div class="abs btn" style="left:729px;top:767px;width:160px;height:21px;"></div>
<div class="abs mono" style="left:779px;top:770px;">Replot&nbsp;Max</div>
<div class="abs btn" style="left:729px;top:795px;width:160px;height:21px;"></div>
<div class="abs mono ins" style="left:791px;top:798px;">Unzoom</div>
<div class="abs btn" style="left:729px;top:823px;width:160px;height:21px;"></div>
<div class="abs mono" style="left:782px;top:826px;">Hard&nbsp;Copy</div>
</body></html>
